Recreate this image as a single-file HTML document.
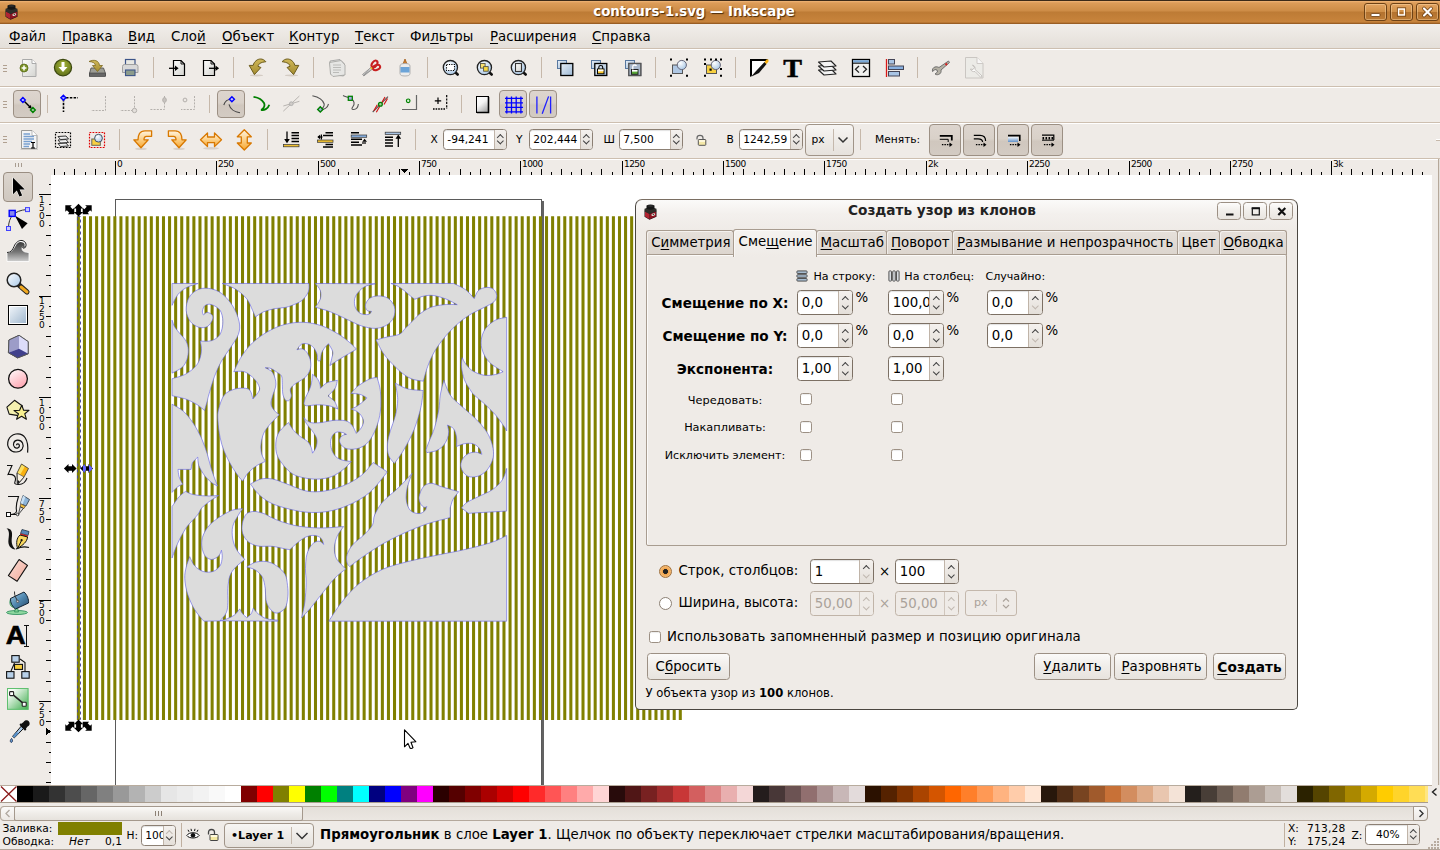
<!DOCTYPE html>
<html lang="ru"><head><meta charset="utf-8"><title>contours-1.svg — Inkscape</title>
<style>
*{box-sizing:border-box;margin:0;padding:0}
html,body{width:1440px;height:850px;overflow:hidden;background:#efebe7;font-family:"DejaVu Sans","Liberation Sans",sans-serif;font-size:13.33px;color:#000}
.abs{position:absolute}
u{text-decoration:underline;text-underline-offset:2px;text-decoration-thickness:1px}
#titlebar{position:absolute;left:0;top:0;width:1440px;height:24px;background:linear-gradient(#3c2a18 0,#3c2a18 1px,#f0b878 1px,#e6a666 2px,#dc9c58 3px,#cd8c46 11px,#bd7b35 12px,#c8843c 22px,#a86828 23px,#8a5420 24px)}
#title{position:absolute;left:0;top:4px;width:1388px;text-align:center;font-weight:bold;color:#fff;font-size:13.33px;text-shadow:1px 1px 1px #4a2a0a;letter-spacing:0}
.wbtn{position:absolute;top:3px;width:23px;height:18px;border:1px solid #6e4215;border-radius:3px;background:linear-gradient(#e3a462,#cf9048 50%,#b3722f 52%,#bd7c36);box-shadow:inset 0 0 0 1px rgba(255,220,170,.45)}
#menubar{position:absolute;left:0;top:24px;width:1440px;height:24px;background:linear-gradient(#f1eeea,#e4dfd9)}
#menubar span{position:absolute;top:5px;white-space:nowrap}
.hsep{position:absolute;left:0;width:1440px;height:2px;background:linear-gradient(#cdbfb0 0,#cdbfb0 1px,#fff 1px,#fff 2px)}
.tbtn{position:absolute;border:1px solid #9c9084;border-radius:4px;background:linear-gradient(#ddd5ce,#d9d1c9 45%,#d0c7be 55%,#d3cbc3)}
.spin{position:absolute;height:21px;border:1px solid #8c8074;border-radius:3.500px;background:#fff;overflow:hidden;box-shadow:inset 0 1px 1px rgba(0,0,0,.12)}
.spin span{position:absolute;left:3.300px;top:3px;white-space:nowrap;font-size:10.670px}
.sm{font-size:10.670px}
.spin i{position:absolute;right:0;top:0;bottom:0;width:12px;background:linear-gradient(#f4f1ee,#e4dfd9);border-left:1px solid #c0b4a8}
.spin i:before,.spin i:after{content:"";position:absolute;left:3px;width:3.600px;height:3.600px;border:solid #444;border-width:1.100px 0 0 1.100px}
.spin i:before{top:5px;transform:rotate(45deg)}
.spin i:after{bottom:5px;transform:rotate(225deg)}
.lbl{position:absolute;white-space:nowrap}
#dlg{border:1px solid #4a4640;border-top-color:#7a6e62;border-radius:7px 7px 5px 5px;background:linear-gradient(#fbfaf9 0,#f3f0ed 14px,#efebe7 30px);overflow:hidden}
.dbtn{width:24px;height:18px;border:1px solid #9c9084;border-radius:3.500px;background:linear-gradient(#fdfcfb,#f1eeea 50%,#e9e5e0)}
.tab{border:1px solid #a89c90;border-bottom:none;border-radius:3px 3px 0 0;background:linear-gradient(#e6e0da,#dcd5ce);box-shadow:inset 1px 1px 0 rgba(255,255,255,.55)}
.tab span{position:absolute;top:3.700px;white-space:nowrap}
.tab.act{background:linear-gradient(#f5f3f0,#efebe7);border-color:#a89c90}
.tab.act span{top:3.800px}
.tab+.tab{}
.xs{font-size:11.100px}
.dsp{height:25px;border-color:#7c7064}
.dsp span{font-size:13.330px;top:4px}
.dsp i{width:14px}
.dsp i:before,.dsp i:after{left:4px}
.dsp i:before{top:5.500px}
.dsp i:after{bottom:5.500px}
.dsp.dn i:after{border-color:#c0b8b0}
.dsp.dis{background:#efebe7;border-color:#c0b4a8;box-shadow:none}
.dsp.dis span{color:#aaa29a}
.dsp.dis i{background:#efebe7;border-left-color:#d0c6bc}
.dsp.dis i:before,.dsp.dis i:after{border-color:#c0b8b0}
.chk{width:12px;height:12px;border:1px solid #9c9084;border-radius:2.500px;background:#fff;box-shadow:inset 0 1px 1px rgba(0,0,0,.08)}
.rad{width:13px;height:13px;border:1px solid #8c8074;border-radius:50%;background:#fff}
.rad.on{background:radial-gradient(circle,#222 0,#222 2.200px,#f0a44c 2.800px,#f6c080 6px);border-color:#a0703c}
.btn{border:1px solid #9c9084;border-radius:3.500px;background:linear-gradient(#fbfaf9,#f0ede9 50%,#e7e3de);text-align:center;padding-top:5px;white-space:nowrap}
.spin.up i:before{border-color:#c0b8b0}

</style></head>
<body>
<div id="titlebar">
<svg class="abs" style="left:4.500px;top:4px" width="13" height="16" viewBox="0 0 13 16"><path d="M0.500 6.500L5.500 9L12.500 6.500V12.700L5.500 15.800L0.500 12.700Z" fill="#1c1418"/><path d="M1 7.500L5.500 9.800V15.200L1 12.400Z" fill="#b02432"/><path d="M5.500 9.800L12 7.400V12.400L5.500 15.200Z" fill="#8e1422"/><path d="M0.500 4.800L6.500 2.800L12.500 4.800V7.300L5.500 10L0.500 7.300Z" fill="#2e2e2a"/><path d="M2.500 1.600Q6.500 -0.600 10.500 1.600V4.800Q6.500 6.800 2.500 4.800Z" fill="#161616"/><ellipse cx="6.500" cy="1.900" rx="2.800" ry="1" fill="#2c2c2c"/><ellipse cx="9.300" cy="10.600" rx="2" ry="1.250" transform="rotate(-20 9.300 10.600)" fill="#e8e0dc"/><ellipse cx="9.400" cy="10.500" rx=".9" ry=".6" transform="rotate(-20 9.400 10.500)" fill="#443"/></svg>
<div id="title">contours-1.svg — Inkscape</div>
<div class="wbtn" style="left:1363.5px"><svg class="abs" style="left:0;top:0" width="21" height="16"><rect x="6" y="9.5" width="9" height="3" rx="1" fill="#fff" stroke="#6a3c10" stroke-width=".8"/></svg></div>
<div class="wbtn" style="left:1389.5px"><svg class="abs" style="left:0;top:0" width="21" height="16"><rect x="7.5" y="5" width="6" height="6" fill="none" stroke="#fff" stroke-width="1.6"/><rect x="6.3" y="3.8" width="8.4" height="8.4" fill="none" stroke="#6a3c10" stroke-width=".7"/></svg></div>
<div class="wbtn" style="left:1415.5px"><svg class="abs" style="left:0;top:0" width="21" height="16"><path d="M7 4.5 L14 11.5 M14 4.5 L7 11.5" stroke="#6a3c10" stroke-width="3.6" stroke-linecap="round"/><path d="M7 4.5 L14 11.5 M14 4.5 L7 11.5" stroke="#fff" stroke-width="2.2" stroke-linecap="round"/></svg></div>
</div>
<div id="menubar">
<span style="left:9px"><u>Ф</u>айл</span><span style="left:62px"><u>П</u>равка</span><span style="left:128px"><u>В</u>ид</span><span style="left:171px">Сло<u>й</u></span><span style="left:222px"><u>О</u>бъект</span><span style="left:289px"><u>К</u>онтур</span><span style="left:355px"><u>Т</u>екст</span><span style="left:410px">Фи<u>л</u>ьтры</span><span style="left:490px"><u>Р</u>асширения</span><span style="left:592px"><u>С</u>правка</span>
</div>
<div class="hsep" style="top:48px"></div>
<div class="hsep" style="top:86px"></div>
<div class="hsep" style="top:122px"></div>
<div class="hsep" style="top:158px"></div>
<div class="abs" style="left:0;top:159px;width:36px;height:626px">
<div class="abs" style="left:15px;top:4px;width:7px;height:4px;background:repeating-linear-gradient(90deg,#a89c90 0,#a89c90 1px,transparent 1px,transparent 3px)"></div>
<div class="abs" style="left:3px;top:13px;width:30px;height:30px;border:1px solid #9a8e82;border-radius:4px;background:linear-gradient(#dcd5ce,#cfc7bf)"></div>
<svg class="abs" style="left:6px;top:16px;overflow:visible" width="24" height="24" viewBox="0 0 24 24"><path d="M7 2.8V19.2L10.8 15.6L13.4 21.6L16.2 20.4L13.6 14.6H18.8Z" fill="#000" stroke="#fff" stroke-width="1" stroke-linejoin="round" paint-order="stroke"/></svg>
<svg class="abs" style="left:6px;top:48px;overflow:visible" width="24" height="24" viewBox="0 0 24 24"><path d="M2.5 21C2.5 10 8 3.5 21 2.5" fill="none" stroke="#333" stroke-width="1"/><path d="M8.8 8.6L21.6 16.2L16 22Z" fill="#000"/><rect x="3.2" y="3.4" width="6" height="6" fill="#8888f0" stroke="#0000ff" stroke-width="1.4"/><rect x="19.5" y="0.6" width="4" height="4" fill="#c8c8ff" stroke="#4040ff" stroke-width="1"/><rect x="0.5" y="19.5" width="4" height="4" fill="#c8c8ff" stroke="#4040ff" stroke-width="1"/></svg>
<svg class="abs" style="left:6px;top:80px;overflow:visible" width="24" height="24" viewBox="0 0 24 24"><defs><linearGradient id="tw" x1="0" y1="0" x2="0" y2="1"><stop offset="0" stop-color="#333"/><stop offset=".55" stop-color="#777"/><stop offset="1" stop-color="#d0d0d0"/></linearGradient></defs><path d="M1 13.5C5 13.5 6.5 11 8 7.5C9.5 3.5 13 1 16 1.5C19.5 2 21 5.5 19.5 8C18.5 9.8 16.5 9.5 16.5 7.8C15.5 9.5 15.5 13.5 23 13.5V22.5H1Z" fill="url(#tw)" stroke="#fff" stroke-width=".8"/><path d="M1.500 13.200C5.500 13 7 10.500 8.500 7.500C10 4 13 2 16 2.500C19 3 20 5.500 19 7.500" fill="none" stroke="#fff" stroke-width="1.400"/><path d="M1 13.500C5 13.500 6.500 11 8 7.500C9.500 3.500 13 1 16 1.500C19.500 2 21 5.500 19.500 8C18.500 9.800 16.500 9.500 16.500 7.800" fill="none" stroke="#222" stroke-width="1"/></svg>
<svg class="abs" style="left:6px;top:112px;overflow:visible" width="24" height="24" viewBox="0 0 24 24"><defs><linearGradient id="zg" x1="0" y1="0" x2="1" y2="1"><stop offset="0" stop-color="#fff"/><stop offset="1" stop-color="#a8c8e8"/></linearGradient></defs><path d="M13 14L21 21" stroke="#222" stroke-width="5" stroke-linecap="round"/><path d="M15 16L21 21" stroke="#f0a820" stroke-width="3" stroke-linecap="round"/><circle cx="8" cy="9" r="6.8" fill="url(#zg)" stroke="#222" stroke-width="1.5"/></svg>
<svg class="abs" style="left:6px;top:144px;overflow:visible" width="24" height="24" viewBox="0 0 24 24"><defs><linearGradient id="rg" x1="0" y1="0" x2="1" y2="1"><stop offset="0" stop-color="#f4f8fc"/><stop offset="1" stop-color="#9cb4cc"/></linearGradient></defs><rect x="2.5" y="2.5" width="19" height="19" fill="url(#rg)" stroke="#000" stroke-width="1"/><rect x="3.5" y="3.5" width="17" height="17" fill="none" stroke="#fff" stroke-width="1"/></svg>
<svg class="abs" style="left:6px;top:176px;overflow:visible" width="24" height="24" viewBox="0 0 24 24"><path d="M13 0.3L22.2 6.6V18.8L11.6 22.9L2.4 17.7L2.9 5Z" fill="#c8c8ec" stroke="#666" stroke-width="1"/><path d="M2.9 5L13 0.3L13 13.7L2.4 17.7Z" fill="#9c9cc8"/><path d="M13 0.3L22.2 6.6V18.8L13 13.7Z" fill="#dcdcfa"/><path d="M2.4 17.7L13 13.7L22.2 18.8L11.6 22.9Z" fill="#40408c"/><path d="M13 0.3L22.2 6.6V18.8L11.6 22.9L2.4 17.7L2.9 5Z" fill="none" stroke="#555" stroke-width="1"/></svg>
<svg class="abs" style="left:6px;top:208px;overflow:visible" width="24" height="24" viewBox="0 0 24 24"><defs><linearGradient id="eg" x1="0" y1="0" x2=".6" y2="1"><stop offset="0" stop-color="#fff"/><stop offset="1" stop-color="#ffa8b4"/></linearGradient></defs><circle cx="12" cy="11.8" r="9.4" fill="url(#eg)" stroke="#111" stroke-width="1.3"/></svg>
<svg class="abs" style="left:6px;top:240px;overflow:visible" width="24" height="24" viewBox="0 0 24 24"><path d="M8.5 1.3L16.1 6.7L12.3 16.6L3.2 15.1L0.9 8.2Z" fill="#f4f0b0" stroke="#111" stroke-width="1.1" stroke-linejoin="round"/><path d="M15.8 6.2L17.6 11.2L23 11.4L18.8 14.8L20.4 20.2L15.6 17.2L10.6 20.2L12.4 14.8L8 11.6L13.6 11.2Z" fill="#f8f090" stroke="#111" stroke-width="1.1" stroke-linejoin="round"/></svg>
<svg class="abs" style="left:6px;top:272px;overflow:visible" width="24" height="24" viewBox="0 0 24 24"><path d="M10.5 14.2C10.5 12.6 13 12.2 13.4 14.4C13.8 16.8 10.6 18 8.6 16.2C6.2 14 7.6 9.4 11.6 9.2C16.2 9 18.6 14.2 16.2 18C13.4 22.2 6.4 21.8 3.4 17.8C-0.4 12.6 2.4 4.4 9.8 3C17.6 1.6 23 8.2 21.6 21.6" fill="none" stroke="#111" stroke-width="1.2"/></svg>
<svg class="abs" style="left:6px;top:304px;overflow:visible" width="24" height="24" viewBox="0 0 24 24"><path d="M1 2.5H6L2 11.5C6 11 9 12 9.5 15.5C10 19 6 21 12 21.5C17 22 20 18 21 15" fill="none" stroke="#111" stroke-width="1.1"/><path d="M15.5 1L22.5 5.5L18 14L11 10Z" fill="#f8b010"/><path d="M15.5 1L19 3.2L14 12L11 10Z" fill="#fce060"/><path d="M11 10L18 14L12.5 20.5L11.5 20Z" fill="#f8f0e0" stroke="#333" stroke-width=".6"/><path d="M11.6 17L13.6 18.2L12.2 21L11.2 20.4Z" fill="#111"/><path d="M15.5 1L22.5 5.5L18 14L12.2 21L11.2 20.4L11 10Z" fill="none" stroke="#333" stroke-width=".8"/></svg>
<svg class="abs" style="left:6px;top:336px;overflow:visible" width="24" height="24" viewBox="0 0 24 24"><g transform="translate(0,-3.5)"><path d="M2 5H12.500C10.500 11 9.500 14 10.500 19C11.200 22 6 23 5 23" fill="none" stroke="#111" stroke-width="1.100"/><path d="M4 23H11" stroke="#111" stroke-width="1"/><rect x="0.500" y="21" width="4" height="4" fill="#fff" stroke="#111" stroke-width="1"/><circle cx="11.600" cy="23" r="1.300" fill="#fff" stroke="#111" stroke-width=".8"/><path d="M17 4L23.500 8L20 14.500L14.500 12Z" fill="#8cb4d8" stroke="#345" stroke-width=".9"/><path d="M17 4L19.500 5.500L16.500 13L14.500 12Z" fill="#c8e0f4"/><path d="M14.800 12.300L19.400 14.700L17.800 17.100L14 15.100Z" fill="#f0c040" stroke="#543" stroke-width=".7"/><path d="M14.200 15.300L17.400 16.900L12.400 23Z" fill="#ddd" stroke="#222" stroke-width=".8"/></g></svg>
<svg class="abs" style="left:6px;top:368px;overflow:visible" width="24" height="24" viewBox="0 0 24 24"><path d="M0.5 1.5C5 1.5 6.5 4 6 9C5.5 14 5 18 9.5 22.5C5 22 1.5 19 2.5 12C3.2 7 3.5 3.5 0.5 1.5Z" fill="#111"/><path d="M10 22C14 20 18 19 23 20.5" fill="none" stroke="#111" stroke-width="1.2"/><path d="M16 2.5L23 4.5L22 8.5L14.5 6.5Z" fill="#5888b8" stroke="#234" stroke-width=".8"/><path d="M14.5 6.5L22 8.5L21.6 10L14 8Z" fill="#d02020"/><path d="M14 8L21.6 10C21 15 17 18 11.5 21.5C10 16 10.5 11 14 8Z" fill="#f8d860" stroke="#111" stroke-width="1"/><path d="M11.8 21L15.5 13.5" stroke="#111" stroke-width="1"/><circle cx="15.6" cy="13.2" r="1.1" fill="#111"/></svg>
<svg class="abs" style="left:6px;top:400px;overflow:visible" width="24" height="24" viewBox="0 0 24 24"><defs><linearGradient id="er" x1="0" y1="0" x2="1" y2="1"><stop offset="0" stop-color="#fce0d8"/><stop offset="1" stop-color="#f0a898"/></linearGradient></defs><path d="M13.1 0.5L21.5 6.4L11.1 22.3L2.4 16.6Z" fill="url(#er)" stroke="#111" stroke-width="1.1" stroke-linejoin="round"/></svg>
<svg class="abs" style="left:6px;top:432px;overflow:visible" width="24" height="24" viewBox="0 0 24 24"><defs><linearGradient id="bk" x1="0" y1="0" x2="1" y2="1"><stop offset="0" stop-color="#a8d0e8"/><stop offset=".5" stop-color="#5088b0"/><stop offset="1" stop-color="#284868"/></linearGradient></defs><ellipse cx="11" cy="21.5" rx="10.5" ry="2" fill="#90d8a0" stroke="#285" stroke-width=".8"/><path d="M4.5 8C3 12 4 16 8 16.5C9.5 17 9 20 8.5 21H12.5C11.5 19 12 17 12 15Z" fill="#80d090" stroke="#285" stroke-width=".7"/><path d="M4.5 7.5L18 1C21 3.5 23 8.5 22.5 12L9.5 18C6 15.5 4.2 11.5 4.5 7.5Z" fill="url(#bk)" stroke="#123" stroke-width="1"/><path d="M8.5 0.5C8 4 10.5 8 11.5 10" fill="none" stroke="#333" stroke-width="1"/><circle cx="11.6" cy="10.4" r="1.2" fill="#ccc" stroke="#333" stroke-width=".6"/></svg>
<svg class="abs" style="left:6px;top:464px;overflow:visible" width="24" height="24" viewBox="0 0 24 24"><text transform="translate(-0.300,21) scale(1.1,1)" font-family="Liberation Sans,DejaVu Sans,sans-serif" font-weight="bold" font-size="25" fill="#000" stroke="#000" stroke-width=".6">A</text><path d="M18 2.5H23M18 23.5H23M20.5 2.5V23.5" stroke="#111" stroke-width="1" fill="none"/></svg>
<svg class="abs" style="left:6px;top:496px;overflow:visible" width="24" height="24" viewBox="0 0 24 24"><path d="M14 4L19 7.5V17M8.5 8L5 16" fill="none" stroke="#111" stroke-width="1.1"/><rect x="5.8" y="0.6" width="7.4" height="6.6" fill="#b8d0e8" stroke="#111" stroke-width="1.1"/><rect x="8.5" y="9.4" width="8" height="5" fill="#f8d040" stroke="#111" stroke-width="1.1"/><rect x="0.6" y="16.6" width="7.4" height="6.6" fill="#b8d0e8" stroke="#111" stroke-width="1.1"/><rect x="15.8" y="16.6" width="7.4" height="6.6" fill="#b8d0e8" stroke="#111" stroke-width="1.1"/></svg>
<svg class="abs" style="left:6px;top:528px;overflow:visible" width="24" height="24" viewBox="0 0 24 24"><defs><linearGradient id="gg" x1="1" y1="1" x2="0.2" y2="0.2"><stop offset="0" stop-color="#38a848"/><stop offset="1" stop-color="#f4fcf4"/></linearGradient></defs><rect x="1" y="1" width="21.5" height="21.8" fill="url(#gg)"/><rect x="1.5" y="1.5" width="20.5" height="20.8" fill="none" stroke="#60c070" stroke-width="1"/><path d="M5.6 6.6L18.2 17.2" stroke="#222" stroke-width="1.6"/><rect x="3.6" y="4.6" width="4" height="4" rx=".8" fill="#fff" stroke="#222" stroke-width="1.1"/><rect x="16.2" y="15.2" width="4" height="4" rx=".8" fill="#fff" stroke="#222" stroke-width="1.1"/></svg>
<svg class="abs" style="left:6px;top:560px;overflow:visible" width="24" height="24" viewBox="0 0 24 24"><path d="M6.6 17.4L15.2 7.2L17.6 9.4L8.4 18.8Z" fill="#a8c8e8" stroke="#111" stroke-width="1"/><path d="M6.6 17.4L10.5 12.8L12.6 14.6L8.4 18.8Z" fill="#5890c8"/><path d="M14 6.4C13 5.4 14.4 4 15.4 4.8L17.6 3C18.6 1 21.6 0.6 23 2.4C24.4 4.4 23.6 6.6 21.6 7.6L20 9.6C21 10.8 19.4 12.2 18.4 11.2Z" fill="#111"/><path d="M5.6 19.4C7 21 6.6 23.2 5.4 23.4C4 23.4 3.8 21 5.6 19.4Z" fill="#70a8e0" stroke="#124" stroke-width=".8"/></svg>
</div>
<svg class="abs" style="left:0;top:159px" width="1440" height="16" viewBox="0 159 1440 16" shape-rendering="crispEdges">
<path d="M54.5 169 V175 M64.5 172 V175 M74.5 169 V175 M85.5 172 V175 M95.5 169 V175 M105.5 172 V175 M115.5 161 V175 M125.5 172 V175 M135.5 169 V175 M145.5 172 V175 M156.5 169 V175 M166.5 172 V175 M176.5 169 V175 M186.5 172 V175 M196.5 169 V175 M206.5 172 V175 M216.5 161 V175 M226.5 172 V175 M237.5 169 V175 M247.5 172 V175 M257.5 169 V175 M267.5 172 V175 M277.5 169 V175 M287.5 172 V175 M297.5 169 V175 M308.5 172 V175 M318.5 161 V175 M328.5 172 V175 M338.5 169 V175 M348.5 172 V175 M358.5 169 V175 M368.5 172 V175 M379.5 169 V175 M389.5 172 V175 M399.5 169 V175 M409.5 172 V175 M419.5 161 V175 M429.5 172 V175 M439.5 169 V175 M449.5 172 V175 M460.5 169 V175 M470.5 172 V175 M480.5 169 V175 M490.5 172 V175 M500.5 169 V175 M510.5 172 V175 M520.5 161 V175 M531.5 172 V175 M541.5 169 V175 M551.5 172 V175 M561.5 169 V175 M571.5 172 V175 M581.5 169 V175 M591.5 172 V175 M601.5 169 V175 M612.5 172 V175 M622.5 161 V175 M632.5 172 V175 M642.5 169 V175 M652.5 172 V175 M662.5 169 V175 M672.5 172 V175 M683.5 169 V175 M693.5 172 V175 M703.5 169 V175 M713.5 172 V175 M723.5 161 V175 M733.5 172 V175 M743.5 169 V175 M754.5 172 V175 M764.5 169 V175 M774.5 172 V175 M784.5 169 V175 M794.5 172 V175 M804.5 169 V175 M814.5 172 V175 M824.5 161 V175 M835.5 172 V175 M845.5 169 V175 M855.5 172 V175 M865.5 169 V175 M875.5 172 V175 M885.5 169 V175 M895.5 172 V175 M906.5 169 V175 M916.5 172 V175 M926.5 161 V175 M936.5 172 V175 M946.5 169 V175 M956.5 172 V175 M966.5 169 V175 M976.5 172 V175 M987.5 169 V175 M997.5 172 V175 M1007.5 169 V175 M1017.5 172 V175 M1027.5 161 V175 M1037.5 172 V175 M1047.5 169 V175 M1058.5 172 V175 M1068.5 169 V175 M1078.5 172 V175 M1088.5 169 V175 M1098.5 172 V175 M1108.5 169 V175 M1118.5 172 V175 M1129.5 161 V175 M1139.5 172 V175 M1149.5 169 V175 M1159.5 172 V175 M1169.5 169 V175 M1179.5 172 V175 M1189.5 169 V175 M1199.5 172 V175 M1210.5 169 V175 M1220.5 172 V175 M1230.5 161 V175 M1240.5 172 V175 M1250.5 169 V175 M1260.5 172 V175 M1270.5 169 V175 M1281.5 172 V175 M1291.5 169 V175 M1301.5 172 V175 M1311.5 169 V175 M1321.5 172 V175 M1331.5 161 V175 M1341.5 172 V175 M1351.5 169 V175 M1362.5 172 V175 M1372.5 169 V175 M1382.5 172 V175 M1392.5 169 V175 M1402.5 172 V175 M1412.5 169 V175 M1422.5 172 V175" stroke="#000" stroke-width="1" fill="none"/>
<text x="117" y="167" font-size="9" letter-spacing="-0.6" font-family="DejaVu Sans,Liberation Sans,sans-serif">0</text>
<text x="218" y="167" font-size="9" letter-spacing="-0.6" font-family="DejaVu Sans,Liberation Sans,sans-serif">250</text>
<text x="320" y="167" font-size="9" letter-spacing="-0.6" font-family="DejaVu Sans,Liberation Sans,sans-serif">500</text>
<text x="421" y="167" font-size="9" letter-spacing="-0.6" font-family="DejaVu Sans,Liberation Sans,sans-serif">750</text>
<text x="522" y="167" font-size="9" letter-spacing="-0.6" font-family="DejaVu Sans,Liberation Sans,sans-serif">1000</text>
<text x="624" y="167" font-size="9" letter-spacing="-0.6" font-family="DejaVu Sans,Liberation Sans,sans-serif">1250</text>
<text x="725" y="167" font-size="9" letter-spacing="-0.6" font-family="DejaVu Sans,Liberation Sans,sans-serif">1500</text>
<text x="826" y="167" font-size="9" letter-spacing="-0.6" font-family="DejaVu Sans,Liberation Sans,sans-serif">1750</text>
<text x="928" y="167" font-size="9" letter-spacing="-0.6" font-family="DejaVu Sans,Liberation Sans,sans-serif">2k</text>
<text x="1029" y="167" font-size="9" letter-spacing="-0.6" font-family="DejaVu Sans,Liberation Sans,sans-serif">2250</text>
<text x="1131" y="167" font-size="9" letter-spacing="-0.6" font-family="DejaVu Sans,Liberation Sans,sans-serif">2500</text>
<text x="1232" y="167" font-size="9" letter-spacing="-0.6" font-family="DejaVu Sans,Liberation Sans,sans-serif">2750</text>
<text x="1333" y="167" font-size="9" letter-spacing="-0.6" font-family="DejaVu Sans,Liberation Sans,sans-serif">3k</text>
<path d="M401 169H408L404.5 173.2Z" fill="#000"/>
</svg>
<svg class="abs" style="left:36px;top:175px" width="15" height="610" viewBox="36 175 15 610" shape-rendering="crispEdges">
<path d="M49 184.5 H51 M39 194.5 H51 M49 204.5 H51 M46 215.5 H51 M49 225.5 H51 M46 235.5 H51 M49 245.5 H51 M46 255.5 H51 M49 265.5 H51 M46 275.5 H51 M49 285.5 H51 M39 296.5 H51 M49 306.5 H51 M46 316.5 H51 M49 326.5 H51 M46 336.5 H51 M49 346.5 H51 M46 356.5 H51 M49 367.5 H51 M46 377.5 H51 M49 387.5 H51 M39 397.5 H51 M49 407.5 H51 M46 417.5 H51 M49 427.5 H51 M46 437.5 H51 M49 448.5 H51 M46 458.5 H51 M49 468.5 H51 M46 478.5 H51 M49 488.5 H51 M39 498.5 H51 M49 508.5 H51 M46 519.5 H51 M49 529.5 H51 M46 539.5 H51 M49 549.5 H51 M46 559.5 H51 M49 569.5 H51 M46 579.5 H51 M49 590.5 H51 M39 600.5 H51 M49 610.5 H51 M46 620.5 H51 M49 630.5 H51 M46 640.5 H51 M49 650.5 H51 M46 660.5 H51 M49 671.5 H51 M46 681.5 H51 M49 691.5 H51 M39 701.5 H51 M49 711.5 H51 M46 721.5 H51 M49 731.5 H51 M46 742.5 H51 M49 752.5 H51 M46 762.5 H51 M49 772.5 H51 M46 782.5 H51" stroke="#000" stroke-width="1" fill="none"/>
<text x="39" y="202.8" font-size="9" font-family="DejaVu Sans,Liberation Sans,sans-serif">1</text>
<text x="39" y="210.7" font-size="9" font-family="DejaVu Sans,Liberation Sans,sans-serif">5</text>
<text x="39" y="218.6" font-size="9" font-family="DejaVu Sans,Liberation Sans,sans-serif">0</text>
<text x="39" y="226.5" font-size="9" font-family="DejaVu Sans,Liberation Sans,sans-serif">0</text>
<text x="39" y="303.8" font-size="9" font-family="DejaVu Sans,Liberation Sans,sans-serif">1</text>
<text x="39" y="311.7" font-size="9" font-family="DejaVu Sans,Liberation Sans,sans-serif">2</text>
<text x="39" y="319.6" font-size="9" font-family="DejaVu Sans,Liberation Sans,sans-serif">5</text>
<text x="39" y="327.5" font-size="9" font-family="DejaVu Sans,Liberation Sans,sans-serif">0</text>
<text x="39" y="405.8" font-size="9" font-family="DejaVu Sans,Liberation Sans,sans-serif">1</text>
<text x="39" y="413.7" font-size="9" font-family="DejaVu Sans,Liberation Sans,sans-serif">0</text>
<text x="39" y="421.6" font-size="9" font-family="DejaVu Sans,Liberation Sans,sans-serif">0</text>
<text x="39" y="429.5" font-size="9" font-family="DejaVu Sans,Liberation Sans,sans-serif">0</text>
<text x="39" y="506.8" font-size="9" font-family="DejaVu Sans,Liberation Sans,sans-serif">7</text>
<text x="39" y="514.7" font-size="9" font-family="DejaVu Sans,Liberation Sans,sans-serif">5</text>
<text x="39" y="522.6" font-size="9" font-family="DejaVu Sans,Liberation Sans,sans-serif">0</text>
<text x="39" y="607.8" font-size="9" font-family="DejaVu Sans,Liberation Sans,sans-serif">5</text>
<text x="39" y="615.7" font-size="9" font-family="DejaVu Sans,Liberation Sans,sans-serif">0</text>
<text x="39" y="623.6" font-size="9" font-family="DejaVu Sans,Liberation Sans,sans-serif">0</text>
<text x="39" y="709.8" font-size="9" font-family="DejaVu Sans,Liberation Sans,sans-serif">2</text>
<text x="39" y="717.7" font-size="9" font-family="DejaVu Sans,Liberation Sans,sans-serif">5</text>
<text x="39" y="725.6" font-size="9" font-family="DejaVu Sans,Liberation Sans,sans-serif">0</text>
<path d="M46 728V735L51 731.5Z" fill="#000"/>
</svg>
<div id="canvas" class="abs" style="left:51px;top:175px;width:1381px;height:610px;background:#fff;overflow:hidden">
<svg class="abs" style="left:0;top:0" width="1381" height="610" viewBox="51 175 1381 610">
<rect x="542" y="201" width="2" height="600" fill="#636363" shape-rendering="crispEdges"/>
<rect x="115.5" y="199.5" width="426" height="604" fill="none" stroke="#5a5a5a" stroke-width="1" shape-rendering="crispEdges"/>
<path d="M76.85 216.3h3.04V719.9h-3.04zM82.93 216.3h3.04V719.9h-3.04zM89.01 216.3h3.04V719.9h-3.04zM95.09 216.3h3.04V719.9h-3.04zM101.17 216.3h3.04V719.9h-3.04zM107.25 216.3h3.04V719.9h-3.04zM113.33 216.3h3.04V719.9h-3.04zM119.41 216.3h3.04V719.9h-3.04zM125.49 216.3h3.04V719.9h-3.04zM131.57 216.3h3.04V719.9h-3.04zM137.65 216.3h3.04V719.9h-3.04zM143.73 216.3h3.04V719.9h-3.04zM149.81 216.3h3.04V719.9h-3.04zM155.89 216.3h3.04V719.9h-3.04zM161.97 216.3h3.04V719.9h-3.04zM168.05 216.3h3.04V719.9h-3.04zM174.13 216.3h3.04V719.9h-3.04zM180.21 216.3h3.04V719.9h-3.04zM186.29 216.3h3.04V719.9h-3.04zM192.37 216.3h3.04V719.9h-3.04zM198.45 216.3h3.04V719.9h-3.04zM204.53 216.3h3.04V719.9h-3.04zM210.61 216.3h3.04V719.9h-3.04zM216.69 216.3h3.04V719.9h-3.04zM222.77 216.3h3.04V719.9h-3.04zM228.85 216.3h3.04V719.9h-3.04zM234.93 216.3h3.04V719.9h-3.04zM241.01 216.3h3.04V719.9h-3.04zM247.09 216.3h3.04V719.9h-3.04zM253.17 216.3h3.04V719.9h-3.04zM259.25 216.3h3.04V719.9h-3.04zM265.33 216.3h3.04V719.9h-3.04zM271.41 216.3h3.04V719.9h-3.04zM277.49 216.3h3.04V719.9h-3.04zM283.57 216.3h3.04V719.9h-3.04zM289.65 216.3h3.04V719.9h-3.04zM295.73 216.3h3.04V719.9h-3.04zM301.81 216.3h3.04V719.9h-3.04zM307.89 216.3h3.04V719.9h-3.04zM313.97 216.3h3.04V719.9h-3.04zM320.05 216.3h3.04V719.9h-3.04zM326.13 216.3h3.04V719.9h-3.04zM332.21 216.3h3.04V719.9h-3.04zM338.29 216.3h3.04V719.9h-3.04zM344.37 216.3h3.04V719.9h-3.04zM350.45 216.3h3.04V719.9h-3.04zM356.53 216.3h3.04V719.9h-3.04zM362.61 216.3h3.04V719.9h-3.04zM368.69 216.3h3.04V719.9h-3.04zM374.77 216.3h3.04V719.9h-3.04zM380.85 216.3h3.04V719.9h-3.04zM386.93 216.3h3.04V719.9h-3.04zM393.01 216.3h3.04V719.9h-3.04zM399.09 216.3h3.04V719.9h-3.04zM405.17 216.3h3.04V719.9h-3.04zM411.25 216.3h3.04V719.9h-3.04zM417.33 216.3h3.04V719.9h-3.04zM423.41 216.3h3.04V719.9h-3.04zM429.49 216.3h3.04V719.9h-3.04zM435.57 216.3h3.04V719.9h-3.04zM441.65 216.3h3.04V719.9h-3.04zM447.73 216.3h3.04V719.9h-3.04zM453.81 216.3h3.04V719.9h-3.04zM459.89 216.3h3.04V719.9h-3.04zM465.97 216.3h3.04V719.9h-3.04zM472.05 216.3h3.04V719.9h-3.04zM478.13 216.3h3.04V719.9h-3.04zM484.21 216.3h3.04V719.9h-3.04zM490.29 216.3h3.04V719.9h-3.04zM496.37 216.3h3.04V719.9h-3.04zM502.45 216.3h3.04V719.9h-3.04zM508.53 216.3h3.04V719.9h-3.04zM514.61 216.3h3.04V719.9h-3.04zM520.69 216.3h3.04V719.9h-3.04zM526.77 216.3h3.04V719.9h-3.04zM532.85 216.3h3.04V719.9h-3.04zM538.93 216.3h3.04V719.9h-3.04zM545.01 216.3h3.04V719.9h-3.04zM551.09 216.3h3.04V719.9h-3.04zM557.17 216.3h3.04V719.9h-3.04zM563.25 216.3h3.04V719.9h-3.04zM569.33 216.3h3.04V719.9h-3.04zM575.41 216.3h3.04V719.9h-3.04zM581.49 216.3h3.04V719.9h-3.04zM587.57 216.3h3.04V719.9h-3.04zM593.65 216.3h3.04V719.9h-3.04zM599.73 216.3h3.04V719.9h-3.04zM605.81 216.3h3.04V719.9h-3.04zM611.89 216.3h3.04V719.9h-3.04zM617.97 216.3h3.04V719.9h-3.04zM624.05 216.3h3.04V719.9h-3.04zM630.13 216.3h3.04V719.9h-3.04zM636.21 216.3h3.04V719.9h-3.04zM642.29 216.3h3.04V719.9h-3.04zM648.37 216.3h3.04V719.9h-3.04zM654.45 216.3h3.04V719.9h-3.04zM660.53 216.3h3.04V719.9h-3.04zM666.61 216.3h3.04V719.9h-3.04zM672.69 216.3h3.04V719.9h-3.04zM678.77 216.3h3.04V719.9h-3.04z" fill="#808000"/>
<g fill="#dcdcdc" stroke="#5c5ce6" stroke-width="0.6" stroke-linejoin="round">
<path d="M172.06 283.47L198.18 283.47C196.18 284.18 189.59 285.82 186.18 287.71C182.76 289.59 180.06 291.82 177.71 294.76C175.35 297.71 173.00 303.59 172.06 305.35L172.06 283.47Z"/>
<path d="M172.06 320.18C172.53 321.35 173.47 324.88 174.88 327.24C176.29 329.59 178.65 331.94 180.53 334.29C182.41 336.65 184.88 338.76 186.18 341.35C187.47 343.94 188.18 346.76 188.29 349.82C188.41 352.88 187.94 356.76 186.88 359.71C185.82 362.65 184.41 365.24 181.94 367.47C179.47 369.71 173.71 372.18 172.06 373.12L172.06 320.18Z"/>
<path d="M172.06 378.76C174.41 377.94 181.94 376.29 186.18 373.82C190.41 371.35 194.93 367.71 197.47 363.94C200.01 360.18 200.95 355.05 201.42 351.24C201.89 347.42 200.48 342.76 200.29 341.07C202.18 341.00 208.29 341.78 211.59 340.65C214.88 339.52 218.18 337.47 220.06 334.29C221.94 331.12 222.88 325.59 222.88 321.59C222.88 317.59 221.94 313.12 220.06 310.29C218.18 307.47 214.06 305.47 211.59 304.65C209.12 303.82 206.76 304.29 205.24 305.35C203.71 306.41 202.72 309.40 202.41 311.00C202.11 312.60 203.24 314.29 203.40 314.95C204.06 314.53 205.87 312.36 207.35 312.41C208.84 312.46 211.47 313.94 212.29 315.24C213.12 316.53 213.12 318.29 212.29 320.18C211.47 322.06 209.59 325.35 207.35 326.53C205.12 327.71 201.71 328.06 198.88 327.24C196.06 326.41 192.53 324.41 190.41 321.59C188.29 318.76 186.41 314.29 186.18 310.29C185.94 306.29 187.12 301.00 189.00 297.59C190.88 294.18 194.18 291.35 197.47 289.82C200.76 288.29 204.76 287.82 208.76 288.41C212.76 289.00 217.47 290.41 221.47 293.35C225.47 296.29 229.82 301.35 232.76 306.06C235.71 310.76 238.18 316.88 239.12 321.59C240.06 326.29 239.94 329.82 238.41 334.29C236.88 338.76 232.76 343.94 229.94 348.41C227.12 352.88 224.06 356.41 221.47 361.12C218.88 365.82 216.53 371.00 214.41 376.65C212.29 382.29 209.94 391.00 208.76 395.00C207.59 399.00 208.06 398.06 207.35 400.65C206.65 403.24 205.00 408.88 204.53 410.53C203.35 409.59 200.53 406.76 197.47 404.88C194.41 403.00 190.41 400.76 186.18 399.24C181.94 397.71 174.41 396.29 172.06 395.71L172.06 378.76Z"/>
<path d="M222.18 283.47L309.00 283.47C308.88 284.88 309.47 289.12 308.29 291.94C307.12 294.76 304.65 298.18 301.94 300.41C299.24 302.65 294.88 304.18 292.06 305.35C289.24 306.53 287.82 306.93 285.00 307.47C282.18 308.01 278.65 307.89 275.12 308.60C271.59 309.31 267.12 310.32 263.82 311.71C260.53 313.09 256.76 316.06 255.35 316.93C254.88 315.82 253.94 313.28 252.53 310.29C251.12 307.31 249.71 302.53 246.88 299.00C244.06 295.47 239.71 291.71 235.59 289.12C231.47 286.53 224.41 284.41 222.18 283.47L222.18 283.47Z"/>
<path d="M315.35 283.47L375.35 283.75C373.47 284.29 367.35 284.93 364.06 287.00C360.76 289.07 357.12 293.00 355.59 296.18C354.06 299.35 354.18 303.24 354.88 306.06C355.59 308.88 357.59 311.71 359.82 313.12C362.06 314.53 366.34 314.81 368.29 314.53C370.25 314.25 371.00 311.94 371.54 311.42C370.76 311.24 367.89 311.42 366.88 310.29C365.87 309.16 365.00 306.65 365.47 304.65C365.94 302.65 367.59 299.75 369.71 298.29C371.82 296.84 375.12 295.89 378.18 295.89C381.24 295.89 385.35 296.48 388.06 298.29C390.76 300.11 393.47 303.59 394.41 306.76C395.35 309.94 395.00 314.29 393.71 317.35C392.41 320.41 389.71 323.28 386.65 325.12C383.59 326.95 379.59 328.25 375.35 328.36C371.12 328.48 366.18 327.42 361.24 325.82C356.29 324.22 350.88 321.12 345.71 318.76C340.53 316.41 335.24 313.64 330.18 311.71C325.12 309.78 317.82 307.94 315.35 307.19C316.18 305.82 319.47 301.78 320.29 299.00C321.12 296.22 321.12 293.12 320.29 290.53C319.47 287.94 316.18 284.65 315.35 283.47Z"/>
<path d="M390.88 283.47L453.71 283.47C455.71 284.53 462.29 287.31 465.71 289.82C469.12 292.34 472.76 297.12 474.18 298.58C474.88 297.24 476.41 292.39 478.41 290.53C480.41 288.67 483.71 287.66 486.18 287.42C488.65 287.19 491.47 287.78 493.24 289.12C495.00 290.46 496.65 293.35 496.76 295.47C496.88 297.59 496.06 299.82 493.94 301.82C491.82 303.82 487.82 305.47 484.06 307.47C480.29 309.47 475.59 311.24 471.35 313.82C467.12 316.41 462.88 319.35 458.65 323.00C454.41 326.65 449.94 331.00 445.94 335.71C441.94 340.41 437.71 346.06 434.65 351.24C431.59 356.41 429.47 361.78 427.59 366.76C425.71 371.75 424.06 378.76 423.35 381.16C421.71 380.88 416.53 380.46 413.47 379.47C410.41 378.48 408.06 377.35 405.00 375.24C401.94 373.12 398.65 370.29 395.12 366.76C391.59 363.24 387.00 358.53 383.82 354.06C380.65 349.59 377.35 342.29 376.06 339.94C377.82 339.47 382.76 338.06 386.65 337.12C390.53 336.18 396.29 335.71 399.35 334.29C402.41 332.88 403.12 330.53 405.00 328.65C406.88 326.76 408.29 325.35 410.65 323.00C413.00 320.65 415.82 317.12 419.12 314.53C422.41 311.94 426.18 309.12 430.41 307.47C434.65 305.82 440.06 305.12 444.53 304.65C449.00 304.18 455.12 304.65 457.24 304.65C455.35 303.71 449.94 300.53 445.94 299.00C441.94 297.47 437.00 295.94 433.24 295.47C429.47 295.00 426.41 295.54 423.35 296.18C420.29 296.81 416.29 298.76 414.88 299.28C414.18 298.76 412.29 297.52 410.65 296.18C409.00 294.84 407.12 292.88 405.00 291.24C402.88 289.59 400.29 287.59 397.94 286.29C395.59 285.00 392.06 283.94 390.88 283.47Z"/>
<path d="M506.65 317.35C504.76 317.82 498.88 318.29 495.35 320.18C491.82 322.06 487.82 325.35 485.47 328.65C483.12 331.94 481.71 336.18 481.24 339.94C480.76 343.71 481.24 347.47 482.65 351.24C484.06 355.00 486.29 359.12 489.71 362.53C493.12 365.94 500.88 370.18 503.12 371.71C501.82 372.18 498.53 373.94 495.35 374.53C492.18 375.12 487.82 375.82 484.06 375.24C480.29 374.65 475.82 372.88 472.76 371.00C469.71 369.12 467.47 366.18 465.71 363.94C463.94 361.71 462.76 358.65 462.18 357.59C462.06 359.12 461.12 363.12 461.47 366.76C461.82 370.41 462.88 375.71 464.29 379.47C465.71 383.24 468.29 386.76 469.94 389.35C471.59 391.94 471.82 392.65 474.18 395.00C476.53 397.35 480.53 400.18 484.06 403.47C487.59 406.76 492.06 411.00 495.35 414.76C498.65 418.53 501.94 423.35 503.82 426.06C505.71 428.76 506.18 430.18 506.65 431.00L506.65 317.35Z"/>
<path d="M233.75 371.71C235.00 369.24 238.11 361.71 241.24 356.88C244.36 352.06 248.06 347.00 252.53 342.76C257.00 338.53 262.65 334.53 268.06 331.47C273.47 328.41 279.12 325.94 285.00 324.41C290.88 322.88 297.24 322.06 303.35 322.29C309.47 322.53 315.82 323.82 321.71 325.82C327.59 327.82 333.94 331.47 338.65 334.29C343.35 337.12 346.95 340.29 349.94 342.76C352.93 345.24 355.47 348.06 356.58 349.12C354.79 350.17 349.23 353.42 345.88 355.41C342.53 357.40 339.14 359.36 336.47 361.06C333.80 362.75 330.98 364.82 329.88 365.58C330.20 364.35 331.29 360.56 331.76 358.24C332.24 355.91 333.25 354.08 332.71 351.65C332.16 349.22 329.18 344.98 328.47 343.65C327.76 344.43 325.41 346.71 324.24 348.35C323.06 350.00 322.04 351.57 321.41 353.53C320.78 355.49 320.86 358.91 320.47 360.12C320.08 361.33 319.53 360.78 319.06 360.78C318.59 360.78 317.96 361.17 317.65 360.12C317.33 359.07 317.80 356.51 317.18 354.47C316.55 352.43 315.37 349.61 313.88 347.88C312.39 346.16 310.27 344.75 308.24 344.12C306.20 343.49 303.53 343.18 301.65 344.12C299.76 345.06 297.73 348.82 296.94 349.76C297.73 349.61 300.08 348.51 301.65 348.82C303.22 349.14 304.94 349.92 306.35 351.65C307.76 353.37 309.41 356.51 310.12 359.18C310.82 361.84 311.06 364.98 310.59 367.65C310.12 370.31 308.78 373.14 307.29 375.18C305.80 377.22 303.84 378.31 301.65 379.88C299.45 381.45 296.00 383.02 294.12 384.59C292.24 386.16 290.82 387.41 290.35 389.29C289.88 391.18 291.45 394.08 291.29 395.88C291.14 397.69 290.07 399.30 289.41 400.12C288.75 400.93 288.05 400.85 287.34 400.78C286.64 400.70 285.93 400.78 285.18 399.65C284.42 398.52 283.29 396.51 282.82 394.00C282.35 391.49 282.51 387.41 282.35 384.59C282.20 381.76 282.27 378.78 281.88 377.06C281.49 375.33 280.72 374.97 280.00 374.24C279.28 373.50 279.09 373.60 277.59 372.65C276.09 371.70 273.06 369.35 271.00 368.53C268.94 367.71 266.20 367.84 265.24 367.71C266.47 368.53 270.86 369.90 272.65 372.65C274.43 375.39 275.94 380.33 275.94 384.18C275.94 388.02 273.47 392.41 272.65 395.71C271.82 399.00 270.73 401.47 271.00 403.94C271.27 406.41 272.92 408.75 274.29 410.53C275.67 412.31 278.41 413.96 279.24 414.65C277.84 416.08 273.45 420.16 270.88 423.24C268.31 426.31 265.47 429.59 263.82 433.12C262.18 436.65 261.35 440.88 261.00 444.41C260.65 447.94 260.95 451.47 261.71 454.29C262.46 457.12 264.88 460.18 265.52 461.35C264.06 462.06 259.64 463.71 256.76 465.59C253.89 467.47 250.65 470.06 248.29 472.65C245.94 475.24 243.59 479.71 242.65 481.12C241.94 480.29 240.29 478.76 238.41 476.18C236.53 473.59 233.71 469.71 231.35 465.59C229.00 461.47 226.18 456.18 224.29 451.47C222.41 446.76 221.12 442.53 220.06 437.35C219.00 432.18 218.18 425.12 217.94 420.41C217.71 415.71 217.59 413.35 218.65 409.12C219.71 404.88 221.61 398.33 224.29 395.00C226.98 391.67 231.24 390.24 234.76 389.12C238.29 388.00 242.86 387.96 245.47 388.29C248.08 388.62 249.18 389.31 250.41 391.09C251.65 392.88 252.47 397.68 252.88 399.00C253.76 397.90 257.05 394.33 258.15 392.41C259.25 390.49 260.07 389.67 259.47 387.47C258.87 385.27 257.00 381.84 254.53 379.24C252.06 376.63 248.11 373.08 244.65 371.82C241.18 370.57 235.57 371.73 233.75 371.71Z"/>
<path d="M312.47 374.24C313.33 375.02 316.39 377.22 317.65 378.94C318.90 380.67 319.53 383.02 320.00 384.59C320.47 386.16 320.39 387.73 320.47 388.35C321.57 387.41 324.24 384.04 327.06 382.71C329.88 381.37 335.69 380.75 337.41 380.35C337.10 381.53 336.47 385.45 335.53 387.41C334.59 389.37 333.02 390.71 331.76 392.12C330.51 393.53 328.63 395.25 328.00 395.88C329.10 396.82 332.94 399.33 334.59 401.53C336.24 403.73 337.33 407.80 337.88 409.06C336.39 408.51 332.31 406.47 328.94 405.76C325.57 405.06 321.41 404.82 317.65 404.82C313.88 404.82 308.63 406.00 306.35 405.76C304.08 405.53 304.39 403.80 304.00 403.41C304.24 402.47 304.55 399.96 305.41 397.76C306.27 395.57 308.16 392.75 309.18 390.24C310.20 387.73 310.98 385.37 311.53 382.71C312.08 380.04 312.31 375.65 312.47 374.24Z"/>
<path d="M172.06 404.18C173.94 405.35 179.82 408.06 183.35 411.24C186.88 414.41 190.18 418.65 193.24 423.24C196.29 427.82 199.35 433.59 201.71 438.76C204.06 443.94 205.71 449.12 207.35 454.29C209.00 459.47 209.89 464.53 211.59 469.82C213.28 475.12 216.53 483.35 217.52 486.06C216.53 485.47 213.75 484.29 211.59 482.53C209.42 480.76 206.65 478.29 204.53 475.47C202.41 472.65 200.01 468.65 198.88 465.59C197.75 462.53 197.94 458.53 197.75 457.12C196.88 458.06 193.64 460.72 192.53 462.76C191.42 464.81 191.35 468.29 191.12 469.40L177.99 469.40C178.18 470.65 178.34 474.41 179.12 476.88C179.89 479.35 182.06 483.00 182.65 484.22C181.82 484.65 179.47 485.40 177.71 486.76C175.94 488.13 173.00 491.47 172.06 492.41L172.06 404.18Z"/>
<path d="M377.12 377.35C377.67 379.69 379.86 385.73 380.41 391.35C380.96 396.98 381.10 405.08 380.41 411.12C379.73 417.16 378.23 422.53 376.29 427.59C374.36 432.65 371.64 438.08 368.82 441.47C366.01 444.86 362.75 446.67 359.41 447.94C356.08 449.22 351.67 449.41 348.82 449.12C345.98 448.82 343.88 447.45 342.35 446.18C340.82 444.90 339.94 442.94 339.65 441.47C339.35 440.00 339.94 438.43 340.59 437.35C341.24 436.27 342.55 435.49 343.53 435.00C344.51 434.51 345.98 434.51 346.47 434.41C345.88 434.12 344.51 433.04 342.94 432.65C341.37 432.25 338.73 431.67 337.06 432.06C335.39 432.45 334.02 433.43 332.94 435.00C331.86 436.57 330.78 439.02 330.59 441.47C330.39 443.92 330.88 447.16 331.76 449.71C332.65 452.25 334.02 455.00 335.88 456.76C337.75 458.53 340.35 459.51 342.94 460.29C345.53 461.08 350.00 461.27 351.41 461.47C350.00 462.84 346.31 467.16 342.94 469.71C339.57 472.25 335.49 475.20 331.18 476.76C326.86 478.33 321.96 479.02 317.06 479.12C312.16 479.22 306.27 478.53 301.76 477.35C297.25 476.18 293.97 475.43 290.00 472.06C286.03 468.69 280.30 461.96 277.94 457.12C275.58 452.27 275.59 447.24 275.82 443.00C276.06 438.76 277.24 435.12 279.35 431.71C281.47 428.29 287.00 424.06 288.53 422.53C289.35 423.82 291.47 427.94 293.47 430.29C295.47 432.65 298.18 434.76 300.53 436.65C302.88 438.53 305.82 439.82 307.59 441.59C309.35 443.35 310.29 445.31 311.12 447.24C311.94 449.16 312.29 452.18 312.53 453.16C313.12 452.18 315.35 449.64 316.06 447.24C316.76 444.84 317.47 441.59 316.76 438.76C316.06 435.94 313.59 432.88 311.82 430.29C310.06 427.71 307.52 425.35 306.18 423.24C304.84 421.12 304.18 418.53 303.78 417.59C304.88 418.41 307.42 421.71 310.41 422.53C313.40 423.35 317.94 422.88 321.71 422.53C325.47 422.18 329.00 420.69 333.00 420.41C337.00 420.13 342.53 420.01 345.71 420.84C348.88 421.66 350.29 423.26 352.06 425.35C353.82 427.45 355.59 432.06 356.29 433.40C357.11 432.49 359.97 429.93 361.18 427.94C362.38 425.95 363.53 423.53 363.53 421.47C363.53 419.41 362.25 417.25 361.18 415.59C360.10 413.92 358.73 412.55 357.06 411.47C355.39 410.39 352.16 409.51 351.18 409.12C352.16 408.63 355.29 407.25 357.06 406.18C358.82 405.10 360.10 404.02 361.76 402.65C363.43 401.27 366.18 398.73 367.06 397.94C366.18 397.45 363.43 395.69 361.76 395.00C360.10 394.31 358.82 394.08 357.06 393.82C355.29 393.57 352.16 393.53 351.18 393.47C351.67 392.84 352.68 391.16 354.12 389.71C355.56 388.25 357.23 386.55 359.82 384.76C362.42 382.98 366.82 380.24 369.71 379.00C372.59 377.76 375.88 377.63 377.12 377.35Z"/>
<path d="M250.41 483.94C252.18 483.12 257.35 479.82 261.00 479.00C264.65 478.18 268.29 478.29 272.29 479.00C276.29 479.71 279.35 481.24 285.00 483.24C290.65 485.24 299.59 489.71 306.18 491.00C312.76 492.29 318.18 491.94 324.53 491.00C330.88 490.06 338.18 487.94 344.29 485.35C350.41 482.76 356.41 479.28 361.24 475.47C366.06 471.66 371.24 464.65 373.24 462.48L387.35 471.94C384.41 475.35 376.18 486.88 369.71 492.41C363.24 497.94 355.59 501.94 348.53 505.12C341.47 508.29 334.41 510.29 327.35 511.47C320.29 512.65 313.24 512.76 306.18 512.18C299.12 511.59 291.12 509.59 285.00 507.94C278.88 506.29 273.94 504.65 269.47 502.29C265.00 499.94 261.35 496.88 258.18 493.82C255.00 490.76 251.71 485.59 250.41 483.94Z"/>
<path d="M395.24 383.12C397.29 384.08 402.92 387.65 407.59 388.88C412.25 390.12 420.63 390.25 423.24 390.53C422.82 393.41 422.27 401.37 420.76 407.82C419.25 414.27 416.92 422.37 414.18 429.24C411.43 436.10 407.59 443.29 404.29 449.00C401.00 454.71 396.06 461.08 394.41 463.49C393.45 462.18 389.80 458.83 388.65 455.59C387.49 452.35 387.22 448.18 387.49 444.06C387.77 439.94 389.00 435.55 390.29 430.88C391.58 426.22 394.00 421.27 395.24 416.06C396.47 410.84 397.71 405.08 397.71 399.59C397.71 394.10 395.65 385.86 395.24 383.12Z"/>
<path d="M443.82 380.18C443.24 382.65 441.12 390.18 440.29 395.00C439.47 399.82 439.82 403.71 438.88 409.12C437.94 414.53 436.29 422.06 434.65 427.47C433.00 432.88 430.41 437.94 429.00 441.59C427.59 445.24 426.53 447.52 426.18 449.35C425.82 451.19 426.76 452.06 426.88 452.60C428.41 452.29 433.35 451.89 436.06 450.76C438.76 449.64 441.24 447.82 443.12 445.82C445.00 443.82 446.41 441.12 447.35 438.76C448.29 436.41 448.76 433.99 448.76 431.71C448.76 429.42 447.59 426.18 447.35 425.07C448.41 425.71 452.18 426.84 453.71 428.88C455.24 430.93 456.06 434.41 456.53 437.35C457.00 440.29 456.53 445.00 456.53 446.53C457.82 446.06 461.59 444.18 464.29 443.71C467.00 443.24 470.29 443.00 472.76 443.71C475.24 444.41 477.59 446.18 479.12 447.94C480.65 449.71 481.47 453.24 481.94 454.29C480.88 453.94 477.82 452.29 475.59 452.18C473.35 452.06 470.65 452.53 468.53 453.59C466.41 454.65 464.18 456.53 462.88 458.53C461.59 460.53 460.65 463.24 460.76 465.59C460.88 467.94 462.06 470.76 463.59 472.65C465.12 474.53 467.24 476.41 469.94 476.88C472.65 477.35 476.76 476.88 479.82 475.47C482.88 474.06 486.06 471.47 488.29 468.41C490.53 465.35 492.53 460.88 493.24 457.12C493.94 453.35 493.35 449.59 492.53 445.82C491.71 442.06 490.18 438.06 488.29 434.53C486.41 431.00 484.06 427.94 481.24 424.65C478.41 421.35 474.88 418.06 471.35 414.76C467.82 411.47 463.59 408.18 460.06 404.88C456.53 401.59 452.88 399.12 450.18 395.00C447.47 390.88 444.88 382.65 443.82 380.18Z"/>
<path d="M506.65 468.41C505.94 470.29 504.76 476.18 502.41 479.71C500.06 483.24 496.53 486.76 492.53 489.59C488.53 492.41 482.65 494.53 478.41 496.65C474.18 498.76 469.94 500.41 467.12 502.29C464.29 504.18 462.41 507.00 461.47 507.94L468.53 513.31L506.65 511.05L506.65 468.41Z"/>
<path d="M172.06 506.53C173.24 504.88 176.88 499.16 179.12 496.65C181.35 494.13 184.41 492.29 185.47 491.42C186.76 491.94 189.82 493.78 193.24 494.53C196.65 495.28 201.71 495.78 205.94 495.94C210.18 496.11 216.53 495.59 218.65 495.52C217.24 496.41 213.00 498.81 210.18 500.88C207.35 502.95 203.82 505.59 201.71 507.94C199.59 510.29 200.06 511.71 197.47 515.00C194.88 518.29 189.47 523.00 186.18 527.71C182.88 532.41 180.06 538.18 177.71 543.24C175.35 548.29 173.00 555.59 172.06 558.06L172.06 506.53Z"/>
<path d="M242.65 508.65C241.94 509.71 240.06 512.06 238.41 515.00C236.76 517.94 233.71 522.29 232.76 526.29C231.82 530.29 232.06 535.00 232.76 539.00C233.47 543.00 235.00 546.88 237.00 550.29C239.00 553.71 243.47 557.94 244.76 559.47C243.24 560.76 238.06 564.53 235.59 567.24C233.12 569.94 231.24 572.18 229.94 575.71C228.65 579.24 228.18 583.94 227.82 588.41C227.47 592.88 228.06 598.53 227.82 602.53C227.59 606.53 227.71 609.35 226.41 612.41C225.12 615.47 221.12 619.47 220.06 620.88L203.82 621.16C202.29 619.24 197.35 614.11 194.65 609.59C191.94 605.07 189.24 599.24 187.59 594.06C185.94 588.88 185.00 583.00 184.76 578.53C184.53 574.06 185.35 570.88 186.18 567.24C187.00 563.59 189.12 558.41 189.71 556.65C190.53 558.18 192.41 563.35 194.65 565.82C196.88 568.29 200.06 570.53 203.12 571.47C206.18 572.41 210.18 572.41 213.00 571.47C215.82 570.53 218.53 568.18 220.06 565.82C221.59 563.47 221.94 559.94 222.18 557.35C222.41 554.76 221.59 551.47 221.47 550.29C221.00 551.24 220.29 554.41 218.65 555.94C217.00 557.47 213.82 559.47 211.59 559.47C209.35 559.47 206.84 557.94 205.24 555.94C203.64 553.94 202.46 550.53 201.99 547.47C201.52 544.41 201.52 540.88 202.41 537.59C203.31 534.29 205.35 530.53 207.35 527.71C209.35 524.88 211.82 522.76 214.41 520.65C217.00 518.53 219.82 516.76 222.88 515.00C225.94 513.24 229.47 511.12 232.76 510.06C236.06 509.00 241.00 508.88 242.65 508.65Z"/>
<path d="M220.06 620.88C221.24 620.53 224.76 619.71 227.12 618.76C229.47 617.82 232.06 616.88 234.18 615.24C236.29 613.59 238.88 609.94 239.82 608.88C240.29 609.71 241.47 612.34 242.65 613.82C243.82 615.31 246.18 617.12 246.88 617.78C247.59 617.12 250.06 615.42 251.12 613.82C252.18 612.22 252.88 609.12 253.24 608.18C254.06 609.12 255.94 612.06 258.18 613.82C260.41 615.59 263.35 617.71 266.65 618.76C269.94 619.82 276.06 619.94 277.94 620.18L277.94 621.16L220.06 620.88Z"/>
<path d="M289.94 549.59C291.24 548.41 295.00 544.65 297.71 542.53C300.41 540.41 303.35 538.06 306.18 536.88C309.00 535.71 312.18 535.24 314.65 535.47C317.12 535.71 319.47 536.81 321.00 538.29C322.53 539.78 323.35 543.35 323.82 544.36C323.00 543.82 320.88 541.07 318.88 541.12C316.88 541.16 313.82 542.41 311.82 544.65C309.82 546.88 307.94 550.53 306.88 554.53C305.82 558.53 305.59 563.94 305.47 568.65C305.35 573.35 306.29 577.12 306.18 582.76C306.06 588.41 305.52 596.69 304.76 602.53C304.01 608.36 302.18 615.24 301.66 617.78C303.12 616.18 307.07 612.13 310.41 608.18C313.75 604.22 317.71 599.00 321.71 594.06C325.71 589.12 330.41 582.72 334.41 578.53C338.41 574.34 343.82 570.53 345.71 568.93C344.18 567.24 338.41 562.34 336.53 558.76C334.65 555.19 334.29 551.24 334.41 547.47C334.53 543.71 335.71 539.66 337.24 536.18C338.76 532.69 342.53 528.18 343.59 526.58C339.71 526.81 327.71 528.04 320.29 527.99C312.88 527.94 305.00 527.16 299.12 526.29C293.24 525.42 289.00 523.94 285.00 522.76C281.00 521.59 278.18 520.53 275.12 519.24C272.06 517.94 268.53 515.94 266.65 515.00C264.76 514.06 265.71 514.18 263.82 513.59C261.94 513.00 257.71 511.71 255.35 511.47C253.00 511.24 251.35 511.59 249.71 512.18C248.06 512.76 246.69 513.12 245.47 515.00C244.25 516.88 242.84 520.41 242.36 523.47C241.89 526.53 241.66 530.29 242.65 533.35C243.64 536.41 245.71 539.71 248.29 541.82C250.88 543.94 254.18 545.31 258.18 546.06C262.18 546.81 267.82 545.87 272.29 546.34C276.76 546.81 282.06 548.34 285.00 548.88C287.94 549.42 289.12 549.47 289.94 549.59Z"/>
<path d="M246.88 566.95C248.29 566.18 252.06 563.19 255.35 562.29C258.65 561.40 263.12 561.00 266.65 561.59C270.18 562.18 273.47 563.71 276.53 565.82C279.59 567.94 283.16 571.00 285.00 574.29C286.84 577.59 287.07 581.82 287.54 585.59C288.01 589.35 288.25 593.12 287.82 596.88C287.40 600.65 286.88 605.47 285.00 608.18C283.12 610.88 279.12 613.12 276.53 613.12C273.94 613.12 271.24 610.41 269.47 608.18C267.71 605.94 266.65 603.00 265.94 599.71C265.24 596.41 265.82 592.18 265.24 588.41C264.65 584.65 264.06 580.18 262.41 577.12C260.76 574.06 257.94 571.75 255.35 570.06C252.76 568.36 248.29 567.47 246.88 566.95Z"/>
<path d="M412.06 473.35C409.94 475.61 404.22 482.16 399.35 486.88C394.49 491.61 387.00 497.02 382.88 501.71C378.76 506.39 376.37 511.14 374.65 515.00C372.92 518.86 374.29 521.59 372.53 524.88C370.76 528.18 367.35 531.47 364.06 534.76C360.76 538.06 355.59 541.35 352.76 544.65C349.94 547.94 348.06 551.47 347.12 554.53C346.18 557.59 346.69 561.00 347.12 563.00C347.54 565.00 349.24 565.94 349.66 566.53C352.06 564.76 358.36 559.82 364.06 555.94C369.75 552.06 377.00 547.12 383.82 543.24C390.65 539.35 397.94 535.82 405.00 532.65C412.06 529.47 418.65 526.69 426.18 524.18C433.71 521.66 446.18 518.65 450.18 517.54L450.18 507.94C450.65 506.53 451.59 502.18 453.00 499.47C454.41 496.76 457.71 493.00 458.65 491.71C455.82 490.88 446.29 488.18 441.71 486.76C437.12 485.35 434.18 483.24 431.12 483.24C428.06 483.24 425.35 484.53 423.35 486.76C421.35 489.00 419.59 493.82 419.12 496.65C418.65 499.47 419.71 501.94 420.53 503.71C421.35 505.47 423.00 506.76 424.06 507.24C425.12 507.71 426.41 506.65 426.88 506.53C426.53 507.24 426.06 509.59 424.76 510.76C423.47 511.94 421.47 513.59 419.12 513.59C416.76 513.59 412.76 512.88 410.65 510.76C408.53 508.65 407.00 504.65 406.41 500.88C405.82 497.12 406.18 492.76 407.12 488.18C408.06 483.59 411.24 475.82 412.06 473.35Z"/>
<path d="M328.76 621.16C330.88 618.06 336.53 608.69 341.47 602.53C346.41 596.36 351.82 589.59 358.41 584.18C365.00 578.76 373.24 573.71 381.00 570.06C388.76 566.41 396.29 564.65 405.00 562.29C413.71 559.94 423.82 557.94 433.24 555.94C442.65 553.94 453.00 552.18 461.47 550.29C469.94 548.41 478.18 546.29 484.06 544.65C489.94 543.00 493.00 541.94 496.76 540.41C500.53 538.88 505.00 536.29 506.65 535.47L506.65 621.16L328.76 621.16Z"/>
</g>

<rect x="77.5" y="216.5" width="3" height="503" fill="none" stroke="#50509a" stroke-width="1" stroke-dasharray="3 3"/>
<path d="M65.31 205.31L71.82 205.31L70.26 206.87L72.73 209.34L74.29 207.78L74.29 214.29L67.78 214.29L69.34 212.73L66.87 210.26L65.31 211.82ZM78.50 203.85L83.10 208.45L80.90 208.45L80.90 211.95L83.10 211.95L78.50 216.55L73.90 211.95L76.10 211.95L76.10 208.45L73.90 208.45ZM91.69 205.31L91.69 211.82L90.13 210.26L87.66 212.73L89.22 214.29L82.71 214.29L82.71 207.78L84.27 209.34L86.74 206.87L85.18 205.31ZM74.29 721.81L74.29 728.32L72.73 726.76L70.26 729.23L71.82 730.79L65.31 730.79L65.31 724.28L66.87 725.84L69.34 723.37L67.78 721.81ZM78.50 719.55L83.10 724.15L80.90 724.15L80.90 727.65L83.10 727.65L78.50 732.25L73.90 727.65L76.10 727.65L76.10 724.15L73.90 724.15ZM82.71 721.81L89.22 721.81L87.66 723.37L90.13 725.84L91.69 724.28L91.69 730.79L85.18 730.79L86.74 729.23L84.27 726.76L82.71 728.32ZM63.90 468.50L68.50 463.90L68.50 466.30L72.00 466.30L72.00 463.90L76.60 468.50L72.00 473.10L72.00 470.70L68.50 470.70L68.50 473.10ZM80.30 468.50L84.90 463.90L84.90 466.30L88.40 466.30L88.40 463.90L93.00 468.50L88.40 473.10L88.40 470.70L84.90 470.70L84.90 473.10Z" fill="#000"/>
<clipPath id="hcl"><rect x="82.93" y="460" width="3.04" height="20"/><rect x="89.01" y="460" width="3.04" height="20"/></clipPath>
<path d="M80.30 468.50L84.90 463.90L84.90 466.30L88.40 466.30L88.40 463.90L93.00 468.50L88.40 473.10L88.40 470.70L84.90 470.70L84.90 473.10Z" fill="#6464ff" clip-path="url(#hcl)"/>
<path d="M404.5 729.8V746.8L408 743.4L410 748Q411.5 749.2 413 747.7L411 742.3L415.8 741.7Z" fill="#fff" stroke="#000" stroke-width="1.1" stroke-linejoin="round"/>

</svg>
</div>
<div class="abs" style="left:1438px;top:159px;width:2px;height:626px;background:linear-gradient(90deg,#b5a89a 0,#b5a89a 1px,#e4dfd9 1px)"></div>
<svg class="abs" style="left:0;top:50px" width="1440" height="36" viewBox="0 50 1440 36">
<defs>
<linearGradient id="docg" x1="0" y1="0" x2="1" y2="1"><stop offset="0" stop-color="#fdfdfd"/><stop offset="1" stop-color="#d4d4d0"/></linearGradient>
<linearGradient id="blu" x1="0" y1="0" x2="1" y2="1"><stop offset="0" stop-color="#e8f0f8"/><stop offset="1" stop-color="#9cb8d4"/></linearGradient>
<radialGradient id="lens" cx=".35" cy=".3" r=".8"><stop offset="0" stop-color="#fff"/><stop offset="1" stop-color="#a4c4e4"/></radialGradient>
<linearGradient id="gold" x1="0" y1="0" x2="0" y2="1"><stop offset="0" stop-color="#d0b858"/><stop offset="1" stop-color="#a48c30"/></linearGradient>
<radialGradient id="grn" cx=".5" cy=".35" r=".7"><stop offset="0" stop-color="#a4b438"/><stop offset="1" stop-color="#5c6c18"/></radialGradient>
</defs>
<path d="M3 65.5H7M3 68.5H7M3 71.5H7" stroke="#b0a090" stroke-width="1" shape-rendering="crispEdges"/>
<path d="M153.5 57V78" stroke="#c6b8aa" stroke-width="1" shape-rendering="crispEdges"/>
<path d="M233.5 57V78" stroke="#c6b8aa" stroke-width="1" shape-rendering="crispEdges"/>
<path d="M313.5 57V78" stroke="#c6b8aa" stroke-width="1" shape-rendering="crispEdges"/>
<path d="M427.5 57V78" stroke="#c6b8aa" stroke-width="1" shape-rendering="crispEdges"/>
<path d="M541.5 57V78" stroke="#c6b8aa" stroke-width="1" shape-rendering="crispEdges"/>
<path d="M655.5 57V78" stroke="#c6b8aa" stroke-width="1" shape-rendering="crispEdges"/>
<path d="M735.5 57V78" stroke="#c6b8aa" stroke-width="1" shape-rendering="crispEdges"/>
<path d="M917.5 57V78" stroke="#c6b8aa" stroke-width="1" shape-rendering="crispEdges"/>
<g transform="translate(17,56)"><path d="M5.5 3.5H15L19 7.5V20.5H5.5Z" fill="url(#docg)" stroke="#aaa" stroke-width="1"/><path d="M15 3.5V7.5H19" fill="#fff" stroke="#999" stroke-width=".8"/><circle cx="7" cy="12" r="4" fill="#7c9428" stroke="#5a6c18" stroke-width=".8"/><path d="M7 9.6V14.4M4.6 12H9.4" stroke="#fff" stroke-width="1.5"/></g>
<g transform="translate(51,56)"><ellipse cx="12" cy="11.6" rx="8.6" ry="8.2" fill="url(#grn)" stroke="#3c4810" stroke-width="1.2"/><path d="M10.5 6H13.5V11H16.5L12 16L7.500 11H10.5Z" fill="#fff"/></g>
<g transform="translate(85,56)"><path d="M6 12L4.5 17.5V20H20.500V17.5L18.5 12Z" fill="#9c9c94" stroke="#555" stroke-width=".9"/><rect x="4.500" y="17" width="16" height="3.4" fill="#666" stroke="#444" stroke-width=".6"/><path d="M4 5.5C9 3 14 4.500 14.5 9.5H17.5L12.5 15.500L7.5 9.5H10.500C10 7 8 5.800 4 5.500Z" fill="url(#gold)" stroke="#7c6820" stroke-width=".8"/></g>
<g transform="translate(118,56)"><rect x="7.5" y="3.5" width="9.500" height="7" fill="#e8e8e4" stroke="#3c5488" stroke-width="1.200"/><path d="M4.500 10.5Q4.500 8.5 6.5 8.5H18Q20 8.500 20 10.5V16.500H4.500Z" fill="#d8d8d8" stroke="#999" stroke-width=".9"/><rect x="7.5" y="14" width="9.500" height="5.600" fill="#8c9c8c" stroke="#3c5488" stroke-width="1.100"/></g>
<g transform="translate(165,56)"><path d="M8.5 4.5H16L19.500 8V19.500H8.500Z" fill="url(#docg)" stroke="#000" stroke-width="1.200"/><path d="M16 4.500V8H19.500" fill="none" stroke="#000" stroke-width=".9"/><path d="M4 12.300H11" stroke="#000" stroke-width="1.300"/><path d="M10 9.500L13.600 12.300L10 15.100Z" fill="#000"/></g>
<g transform="translate(195,56)"><path d="M8.5 4.500H16L19.500 8V19.500H8.500Z" fill="url(#docg)" stroke="#000" stroke-width="1.200"/><path d="M16 4.500V8H19.500" fill="none" stroke="#000" stroke-width=".9"/><path d="M14 12.300H21" stroke="#000" stroke-width="1.300"/><path d="M20.500 9.500L24.100 12.300L20.500 15.100Z" fill="#000"/></g>
<g transform="translate(245,56)"><ellipse cx="11.500" cy="19.400" rx="6.500" ry="1" fill="#d4ccc4"/><path d="M20.900 5.700C19.500 4 17.500 3 15.700 3C12.500 2.900 9 5.500 8.200 9.400L4.200 9.400L9.400 18.600L15.900 11.500L13 10.300C13.300 8 15.500 6.300 20.900 5.700Z" fill="url(#gold)" stroke="#6a5a1c" stroke-width="1" stroke-linejoin="round"/></g>
<g transform="translate(303,56) scale(-1,1)"><ellipse cx="11.500" cy="19.400" rx="6.500" ry="1" fill="#d4ccc4"/><path d="M20.900 5.700C19.500 4 17.500 3 15.700 3C12.500 2.900 9 5.500 8.200 9.400L4.200 9.400L9.400 18.600L15.900 11.500L13 10.300C13.300 8 15.500 6.300 20.900 5.700Z" fill="url(#gold)" stroke="#6a5a1c" stroke-width="1" stroke-linejoin="round"/></g>
<g transform="translate(325,56)"><path d="M5 5L15 3.500L19.500 8L18.500 20L6 18.500Z" fill="#e8e8e6" stroke="#999" stroke-width=".8"/><path d="M4.500 6.500L16 4.500L20 9V19L8 20.500L5.500 18Z" fill="#e6e6e4" stroke="#a0a09c" stroke-width=".8"/><path d="M8 9H16M8 11.500H16M8 14H16M8 16.500H14" stroke="#b0b0ac" stroke-width=".8"/></g>
<g transform="translate(359,56)"><path d="M3.500 18.500L12 11.500L13.500 13L5 19.800Z" fill="#d0d0d0" stroke="#888" stroke-width=".8"/><path d="M4.500 19.800L12.500 10.500L14 12Z" fill="#e8e8e8" stroke="#888" stroke-width=".7"/><ellipse cx="15.500" cy="8" rx="2.400" ry="3.800" transform="rotate(35 15.500 8)" fill="none" stroke="#c82020" stroke-width="2"/><ellipse cx="17.500" cy="11.500" rx="2.400" ry="3.800" transform="rotate(70 17.500 11.500)" fill="none" stroke="#c82020" stroke-width="2"/><circle cx="12.400" cy="12.200" r="1" fill="#e8c020"/></g>
<g transform="translate(393,56)"><path d="M10 8L12 3L14 8Z" fill="#d08030" stroke="#a05a18" stroke-width=".8"/><path d="M7 10Q7 7.500 12 7.500Q17 7.500 17 10V17.500Q17 20 12 20Q7 20 7 17.500Z" fill="#ececec" stroke="#aaa" stroke-width=".9"/><rect x="7.500" y="11" width="9" height="5.500" fill="#6ca4d8"/></g>
<g transform="translate(439,56)"><path d="M16.500 16.500L18.700 18.500" stroke="#111" stroke-width="2.600" stroke-linecap="round"/><circle cx="11.400" cy="11.600" r="7.100" fill="url(#lens)" stroke="#222" stroke-width="1.300"/><rect x="7.500" y="8.500" width="8" height="6" fill="#fff" stroke="#000" stroke-width="1.100" stroke-dasharray="1.200 1.200"/></g>
<g transform="translate(473,56)"><path d="M16.500 16.500L18.700 18.500" stroke="#111" stroke-width="2.600" stroke-linecap="round"/><circle cx="11.400" cy="11.600" r="7.100" fill="url(#lens)" stroke="#222" stroke-width="1.300"/><rect x="7.500" y="7.500" width="4.600" height="4.600" fill="#f8e070" stroke="#554" stroke-width=".9"/><rect x="10.600" y="10.600" width="4.600" height="4.600" fill="#f8d840" stroke="#554" stroke-width=".9"/></g>
<g transform="translate(507,56)"><path d="M16.500 16.500L18.700 18.500" stroke="#111" stroke-width="2.600" stroke-linecap="round"/><circle cx="11.400" cy="11.600" r="7.100" fill="url(#lens)" stroke="#222" stroke-width="1.300"/><rect x="8.500" y="7.500" width="6" height="8" fill="url(#docg)" stroke="#333" stroke-width="1.100"/></g>
<g transform="translate(553,56)"><rect x="4.500" y="4.500" width="9" height="8" fill="url(#blu)" stroke="#5878a0" stroke-width="1"/><rect x="7.800" y="7.500" width="12" height="12" fill="url(#blu)" stroke="#000" stroke-width="1.300"/></g>
<g transform="translate(587,56)"><rect x="4.500" y="4.500" width="9" height="8" fill="url(#blu)" stroke="#5878a0" stroke-width="1"/><rect x="7.800" y="7.500" width="12" height="12" fill="url(#blu)" stroke="#000" stroke-width="1.300"/><rect x="10.500" y="13" width="6.500" height="4.800" fill="#f8c830" stroke="#000" stroke-width="1"/><rect x="11" y="13.500" width="5.500" height="1.800" fill="#fff"/><path d="M11.800 13V11.200Q11.800 9.500 13.750 9.500Q15.700 9.500 15.700 11.200V13" fill="none" stroke="#000" stroke-width="1.100"/></g>
<g transform="translate(621,56)"><rect x="4.500" y="4.500" width="9" height="8" fill="url(#blu)" stroke="#5878a0" stroke-width="1"/><rect x="7.800" y="7.500" width="12" height="12" fill="url(#blu)" stroke="#667" stroke-width="1.300"/><rect x="7.800" y="7.500" width="12" height="12" fill="#a8b8cc" stroke="#555" stroke-width="1.300"/><rect x="10.500" y="13.500" width="6.500" height="4.800" fill="#58a838" stroke="#222" stroke-width="1"/><rect x="11" y="14" width="5.500" height="1.600" fill="#fff"/><path d="M11.800 13.500V10.500Q11.800 9 13.500 9Q15 9 15.500 10" fill="none" stroke="#fff" stroke-width="1.300"/></g>
<g transform="translate(667,56)"><rect x="5.500" y="9" width="10" height="8.500" fill="#b0c8e4" stroke="#555" stroke-width="1"/><circle cx="14.800" cy="9" r="4.600" fill="url(#lens)" stroke="#667" stroke-width="1"/><path d="M3 3.500h2M19 3.500h2M3 19.800h2M19 19.800h2" stroke="#000" stroke-width="2"/></g>
<g transform="translate(701,56)"><rect x="5.500" y="9" width="10" height="8.500" fill="#f8d040" stroke="#555" stroke-width="1"/><rect x="8.500" y="12.500" width="2.200" height="2.200" fill="#000"/><circle cx="14.800" cy="9" r="4.600" fill="url(#lens)" stroke="#667" stroke-width="1"/><path d="M3 3.500h2M19 3.500h2M3 19.800h2M19 19.800h2" stroke="#000" stroke-width="2"/><path d="M9 3.500h2M14 3.500h2M3 8h2M19 13h2" stroke="#000" stroke-width="2"/></g>
<g transform="translate(747,56)"><path d="M3.500 3.500H20.500L3.500 20.500Z" fill="#fff"/><path d="M3 3H21L19.500 5H5V19.500L3 21Z" fill="#000"/><path d="M4 20.800L12 17L19.500 8L17.500 6L9.500 14.500Z" fill="#111"/><path d="M17.500 6L19.500 8L21.500 5.500V3.500H19.500Z" fill="#f8b010"/></g>
<text transform="translate(783.300,76.800) scale(1.08,1)" font-family="Liberation Serif,DejaVu Serif,serif" font-weight="bold" font-size="26" fill="#000" stroke="#000" stroke-width=".5">T</text>
<path d="M818.500 70 L831 69 L836 74 L824 75 Z" fill="#f4f4f4" stroke="#222" stroke-width="1.100" stroke-linejoin="round"/>
<path d="M818.500 66 L831 65 L836 70 L824 71 Z" fill="#f4f4f4" stroke="#222" stroke-width="1.100" stroke-linejoin="round"/>
<path d="M818.500 62 L831 61 L836 66 L824 67 Z" fill="#f4f4f4" stroke="#222" stroke-width="1.100" stroke-linejoin="round"/>
<g transform="translate(849,56)"><rect x="3.500" y="3.500" width="17" height="17" fill="#f0f0ee" stroke="#000" stroke-width="1.300"/><rect x="4.200" y="4.200" width="15.600" height="2.400" fill="#78a8d8"/><path d="M4 7.200H20" stroke="#000" stroke-width="1"/><path d="M10 10L6.500 13.300L10 16.600M14 10L17.500 13.300L14 16.600" fill="none" stroke="#222" stroke-width="1.300"/></g>
<g transform="translate(883,56)"><path d="M3.500 3V21" stroke="#d81818" stroke-width="1.300"/><rect x="5.500" y="3.500" width="6" height="4.500" fill="#a8c4e4" stroke="#445" stroke-width="1"/><rect x="5.500" y="10" width="15" height="3.500" fill="#88b0e0" stroke="#445" stroke-width="1"/><rect x="5.500" y="15.500" width="11" height="4.500" fill="#a8c4e4" stroke="#445" stroke-width="1"/></g>
<g transform="translate(929,56)"><path d="M19.500 5L20.500 6.500L12 14C12.500 16 11.500 18 9.500 18.500C8 19 6.500 18.500 6 18L8.500 16L8 14L6 13.500L3.500 15.500C3 13.500 4 11.500 6 11C7.500 10.500 9 11 10 11.500Z" fill="#b4b0a4" stroke="#666" stroke-width=".9" stroke-linejoin="round"/><path d="M16.500 7.500L18 9" stroke="#d82020" stroke-width="1.800"/></g>
<g transform="translate(962,56)" opacity=".85"><path d="M3.500 1.500H15L21 7.500V22H3.500Z" fill="#ecebe8" stroke="#c4c0bc" stroke-width="1"/><path d="M15 1.500V7.500H21" fill="#fafafa" stroke="#c4c0bc" stroke-width=".9"/><path d="M20 20L13 13.500C13.500 11.500 12.500 9.500 10.500 9L12.500 11.500L11 13.500L8.500 13C9 15 11 16 13 15.500L19 21.500Z" fill="#fff" stroke="#b8b4b0" stroke-width=".9"/></g>
</svg>
<div class="tbtn" style="left:13px;top:90px;width:28px;height:28px"></div>
<div class="tbtn" style="left:217px;top:90px;width:28px;height:28px"></div>
<div class="tbtn" style="left:499px;top:90px;width:28px;height:28px"></div>
<div class="tbtn" style="left:529px;top:90px;width:28px;height:28px"></div>
<svg class="abs" style="left:0;top:88px" width="1440" height="34" viewBox="0 88 1440 34">
<path d="M3 101.5H7M3 104.5H7M3 107.5H7" stroke="#b0a090" stroke-width="1" shape-rendering="crispEdges"/>
<path d="M47.5 95V113" stroke="#c6b8aa" stroke-width="1" shape-rendering="crispEdges"/>
<path d="M209.5 95V113" stroke="#c6b8aa" stroke-width="1" shape-rendering="crispEdges"/>
<path d="M461.5 95V113" stroke="#c6b8aa" stroke-width="1" shape-rendering="crispEdges"/>
<path d="M24.500 101.500L30.500 107.500" stroke="#000" stroke-width="1.400"/><path d="M31.800 108.800L28 107.800L30.800 105Z" fill="#000"/>
<path d="M22.9 97.6L25.3 100L22.9 102.4L20.5 100Z" fill="#c0c0ff" stroke="#0000ff" stroke-width="1.4"/>
<path d="M32.9 107.6L35.3 110L32.9 112.4L30.5 110Z" fill="#a0c8a0" stroke="#008000" stroke-width="1.4"/>
<path d="M63.500 99V112" stroke="#000" stroke-width="1.600" stroke-dasharray="2.500 1.300"/><path d="M66 97.800H78" stroke="#000" stroke-width="1.600" stroke-dasharray="2.500 1.300"/>
<path d="M63.4 95.3L65.9 97.8L63.4 100.3L60.9 97.8Z" fill="#a0a0ff" stroke="#0000ff" stroke-width="1.4"/>
<g stroke="#b4b0ac" stroke-width="1" fill="none" stroke-dasharray="2 1.200"><path d="M105.500 96V110.500H91"/><path d="M134.500 96V110.500H120"/><path d="M164.500 96V109.500H150"/><path d="M194.500 96V109.500H181"/></g>
<circle cx="134.500" cy="110.500" r="2.200" fill="#e4e0dc" stroke="#b4b0ac"/><ellipse cx="164.500" cy="100" rx="1.800" ry="2.400" fill="#c8c4c0" stroke="#b4b0ac"/><circle cx="185" cy="100" r="1.900" fill="#ece8e4" stroke="#b4b0ac"/>
<path d="M223.800 105C225 101 228 99.300 231.500 99.300M229 104.300C230 109 235 112 240 112.700" fill="none" stroke="#444" stroke-width="1.100"/>
<path d="M231.9 96.8L234.4 99.3L231.9 101.8L229.4 99.3Z" fill="#c8c8ff" stroke="#0000ff" stroke-width="1.4"/>
<path d="M253.500 96.800C258 97.500 262 99.500 264 103C265.500 106 263 109.500 261 109.800C264 110.500 268 109 269.300 104.800" fill="none" stroke="#008000" stroke-width="1.800"/>
<path d="M283.300 111.200L299.400 96M283.300 106L299.400 101.300" stroke="#b8b4b0" stroke-width="1" fill="none"/><circle cx="291.300" cy="103.700" r="1.900" fill="#d0ccc8" stroke="#aaa" stroke-width=".8"/>
<path d="M312.400 95.800C318 97 323 100 324.200 104C324.500 107 322 109 320.500 109.400C324 109.800 327.500 108 328.500 104" fill="none" stroke="#555" stroke-width="1.100"/>
<path d="M320.3 106.8L322.9 109.4L320.3 112L317.7 109.4Z" fill="#a8a8e8" stroke="#008000" stroke-width="1.4"/>
<path d="M343 95.600C346 97 349 97.500 351.500 99C354.500 101 354.800 104 353 106.500C351.500 108.500 351.500 109.500 353.500 109.500C356 109.500 358 107 358.400 104" fill="none" stroke="#555" stroke-width="1.100"/>
<rect x="348.300" y="96.300" width="4" height="4" fill="#a8a8e8" stroke="#008000" stroke-width="1.300"/>
<path d="M372.700 112L388 96.700" stroke="#555" stroke-width="1.100"/><path d="M373.800 110.800L377.300 104.800M376.300 112.300L379.800 106.300M381.500 103L385 97M384 104.500L387.500 98.500" stroke="#d01818" stroke-width="1.200"/><circle cx="380.400" cy="104.300" r="1.900" fill="#a0c8a0" stroke="#008000" stroke-width="1.300"/>
<path d="M416.500 95V109.500H402" fill="none" stroke="#666" stroke-width="1.200"/><circle cx="408.200" cy="100.800" r="1.800" fill="#d8f0d8" stroke="#008000" stroke-width="1.200"/>
<path d="M438 97.500V104M434.800 100.800H441.200" stroke="#000" stroke-width="1.200"/><path d="M446.700 95V109" stroke="#000" stroke-width="1.200" stroke-dasharray="2.200 1.200"/><path d="M433 109H446" stroke="#000" stroke-width="1.400" stroke-dasharray="1.600 1"/>
<defs><linearGradient id="pgb" x1="0" y1="0" x2=".6" y2="1"><stop offset="0" stop-color="#fff"/><stop offset=".5" stop-color="#f4f4f4"/><stop offset="1" stop-color="#b0b0b0"/></linearGradient></defs><rect x="476.500" y="96.500" width="12" height="16" fill="url(#pgb)" stroke="#000" stroke-width="1"/><path d="M488.500 97V112.500H477" fill="none" stroke="#000" stroke-width="1.600"/>
<path d="M506.8 96.400V113.600 M505 98.3H523 M511.5 96.400V113.600 M505 102.8H523 M516.2 96.400V113.600 M505 107.3H523 M520.9 96.400V113.600 M505 111.8H523" stroke="#0000ff" stroke-width="1.300" fill="none"/>
<path d="M536.900 96.400V113.600M542.200 113.800L548.600 96.400M550.600 96.400V113.600" stroke="#2020ff" stroke-width="1.300" fill="none"/>
</svg>
<div class="tbtn" style="left:929px;top:124px;width:32px;height:32px"></div>
<div class="tbtn" style="left:963px;top:124px;width:32px;height:32px"></div>
<div class="tbtn" style="left:997px;top:124px;width:32px;height:32px"></div>
<div class="tbtn" style="left:1031px;top:124px;width:32px;height:32px"></div>
<div class="abs" style="left:805px;top:124px;width:49px;height:32px;border:1px solid #a09488;border-radius:4px;background:linear-gradient(#f7f5f3,#eeebe7 50%,#e6e2dd)"><span class="lbl sm" style="left:5.500px;top:8px">px</span><div class="abs" style="left:27px;top:4px;width:1px;height:22px;background:#c4b8ac"></div><svg class="abs" style="left:31px;top:10px" width="12" height="10"><path d="M1.500 2.500L6 7L10.500 2.500" fill="none" stroke="#333" stroke-width="1.500"/></svg></div>
<span class="lbl sm" style="left:430.500px;top:133px">X</span><div class="spin" style="left:443px;top:129px;width:64px"><span>-94,241</span><i></i></div>
<span class="lbl sm" style="left:516px;top:133px">Y</span><div class="spin" style="left:529px;top:129px;width:64px"><span>202,444</span><i></i></div>
<span class="lbl sm" style="left:603.500px;top:133px">Ш</span><div class="spin" style="left:619px;top:129px;width:64px"><span>7,500</span><i></i></div>
<span class="lbl sm" style="left:726.500px;top:133px">В</span><div class="spin" style="left:739px;top:129px;width:64px"><span>1242,59</span><i></i></div>
<span class="lbl sm" style="left:875px;top:133px">Менять:</span>
<svg class="abs" style="left:0;top:124px" width="1440" height="34" viewBox="0 124 1440 34">
<defs><linearGradient id="org" x1="0" y1="0" x2="0" y2="1"><stop offset="0" stop-color="#fff4e0"/><stop offset=".5" stop-color="#fcd088"/><stop offset="1" stop-color="#f8a830"/></linearGradient></defs>
<path d="M3 136.500H7M3 139.500H7M3 142.500H7" stroke="#b0a090" stroke-width="1" shape-rendering="crispEdges"/>
<path d="M119.500 129V150" stroke="#c6b8aa" stroke-width="1" shape-rendering="crispEdges"/>
<path d="M267.500 129V150" stroke="#c6b8aa" stroke-width="1" shape-rendering="crispEdges"/>
<path d="M415.500 129V150" stroke="#c6b8aa" stroke-width="1" shape-rendering="crispEdges"/>
<path d="M860.500 129V150" stroke="#c6b8aa" stroke-width="1" shape-rendering="crispEdges"/>
<g transform="translate(17,127)"><path d="M4.500 21.500V3.500H15L20 8.500V21.500Z" fill="#f4f4f4" stroke="#9a9a98" stroke-width="1"/><path d="M3.500 22.500H21" stroke="#d0ccc8" stroke-width="1"/><path d="M15 3.500V8.500H20" fill="#fff" stroke="#aaa" stroke-width=".8"/><path d="M6.500 7H13M6.500 9.500H17M6.500 12H17M6.500 14.500H15M6.500 17H13M6.500 19.500H12" stroke="#78a0d0" stroke-width="1.300"/><path d="M14 15.500H18M14 21H18M16 15.500V21" stroke="#000" stroke-width="1.200"/></g>
<g transform="translate(51,127)"><rect x="4.500" y="5.500" width="15" height="15" fill="none" stroke="#000" stroke-width="1.200" stroke-dasharray="1.800 1.200"/>
<path d="M7 16.5 L15 16 L17.500 19 L9.500 19.5 Z" fill="#f0f0f0" stroke="#333" stroke-width="1"/>
<path d="M7 13 L15 12.5 L17.500 15.5 L9.500 16 Z" fill="#f0f0f0" stroke="#333" stroke-width="1"/>
<path d="M7 9.5 L15 9 L17.500 12 L9.500 12.5 Z" fill="#f0f0f0" stroke="#333" stroke-width="1"/>
</g>
<g transform="translate(85,127)"><rect x="4.500" y="5.500" width="15" height="15" fill="none" stroke="#e00000" stroke-width="1.200" stroke-dasharray="1.800 1.200"/><rect x="6.800" y="12" width="8.500" height="6.300" fill="#f8d040" stroke="#665" stroke-width="1"/><circle cx="13.500" cy="11.200" r="3.900" fill="url(#lens)" stroke="#456" stroke-width="1"/></g>
<ellipse cx="141" cy="148.800" rx="6" ry="1.200" fill="#d8d0c8"/><g transform="translate(133,129.300)"><path d="M18.600 1.500H12C6.500 1.500 5 6 5 10.500H0.800L8 18.500L15.200 10.500H11C11 8.500 11.500 7 13.500 7H18.600Z" fill="url(#org)" stroke="#d87800" stroke-width="1.300" stroke-linejoin="round"/></g>
<ellipse cx="179" cy="148.800" rx="6" ry="1.200" fill="#d8d0c8"/><g transform="translate(187,129.300) scale(-1,1)"><path d="M18.600 1.500H12C6.500 1.500 5 6 5 10.500H0.800L8 18.500L15.200 10.500H11C11 8.500 11.500 7 13.500 7H18.600Z" fill="url(#org)" stroke="#d87800" stroke-width="1.300" stroke-linejoin="round"/></g>
<ellipse cx="211" cy="148.300" rx="8" ry="1.200" fill="#d8d0c8"/><path d="M200.500 139.800L207.500 133V137H214.500V133L221.500 139.800L214.500 146.600V142.600H207.500V146.600Z" fill="url(#org)" stroke="#d87800" stroke-width="1.300" stroke-linejoin="round"/>
<path d="M244.300 129.800L251.300 136.800H247.300V143H251.300L244.300 150L237.300 143H241.300V136.800H237.300Z" fill="url(#org)" stroke="#d87800" stroke-width="1.300" stroke-linejoin="round"/>
<g stroke="#000" stroke-width="1.500" fill="none"><path d="M291.500 132.700H299M291.500 135.600H299M291.500 138.500H299M291.500 141.400H299"/><path d="M287 131.500V141" stroke-width="1.300"/></g><path d="M284.200 139L287 143.300L289.800 139Z" fill="#000"/><rect x="283.500" y="144.500" width="15.500" height="2.300" fill="#f0c030" stroke="#333" stroke-width=".7"/>
<g stroke="#000" stroke-width="1.500" fill="none"><path d="M325.500 132.700H333M323 135.600H333M325.500 144.400H333M323 147H333" /></g><rect x="317.500" y="140" width="15.500" height="2.300" fill="#f0c030" stroke="#333" stroke-width=".7"/><path d="M318 137H322.500" stroke="#000" stroke-width="1.200"/><path d="M317.300 137L320.300 134.600V139.400Z" fill="#000"/><path d="M321.500 134.500V139.500" stroke="#000" stroke-width="1"/>
<g stroke="#000" stroke-width="1.500" fill="none"><path d="M351 132.700H359M351 139.300H362M351 142.200H359M351 145.100H362"/></g><rect x="351.200" y="135" width="15.500" height="2.300" fill="#88b0e0" stroke="#333" stroke-width=".7"/><path d="M362 143H366" stroke="#000" stroke-width="1.200"/><path d="M364.600 138.800L367 141.800H362.200Z" fill="#000"/>
<g stroke="#000" stroke-width="1.500" fill="none"><path d="M385 137.200H393M385 140.100H393M385 143H393M385 145.900H393"/><path d="M398.300 137V147" stroke-width="1.300"/></g><path d="M395.500 138.800L398.300 134.500L401.100 138.800Z" fill="#000"/><rect x="385.200" y="132.200" width="15.500" height="2.300" fill="#a8c4e4" stroke="#333" stroke-width=".7"/>
<g transform="translate(695.5,134.5)"><path d="M1.500 5V3.500Q1.500 0.800 4.500 0.800Q7.500 0.800 7.500 3.500V6" fill="none" stroke="#666" stroke-width="1.200"/><rect x="2.800" y="5" width="7.500" height="5.800" rx=".8" fill="#f4e8a8" stroke="#555" stroke-width="1"/><rect x="3.500" y="5.700" width="6" height="1.600" fill="#fffbe8"/></g>
<path d="M939.800 135.800H951.800V140.500" fill="none" stroke="#000" stroke-width="1.800"/><path d="M939.800 139.300H948.200V142" fill="none" stroke="#000" stroke-width="1"/>
<path d="M973.800 135.300H980Q985.600 135.300 985.600 141" fill="none" stroke="#000" stroke-width="1.200"/><path d="M973.800 138.800H978Q982.600 138.800 982.600 142" fill="none" stroke="#000" stroke-width="1.200"/>
<defs><linearGradient id="af3" x1="0" y1="0" x2="0" y2="1"><stop offset="0" stop-color="#fff"/><stop offset="1" stop-color="#6090c8"/></linearGradient></defs><rect x="1008" y="136.500" width="10" height="5.500" fill="url(#af3)"/><path d="M1008 135.600H1019.800V141" fill="none" stroke="#000" stroke-width="1.600"/>
<path d="M1042 135.200H1053.800V140" fill="none" stroke="#000" stroke-width="1.200" /><path d="M1042.500 138.200H1053" stroke="#000" stroke-width="2.600" stroke-dasharray="1.600 1.400"/><path d="M1042 140.200H1054" stroke="#000" stroke-width="1"/>
<path d="M941.9 144.700H949.9" stroke="#000" stroke-width="1.200" stroke-dasharray="1.500 1"/><path d="M949.5 142.400L952.5 144.700L949.5 147Z" fill="#000"/>
<path d="M975.9 144.700H983.9" stroke="#000" stroke-width="1.200" stroke-dasharray="1.500 1"/><path d="M983.5 142.400L986.5 144.700L983.5 147Z" fill="#000"/>
<path d="M1009.9 144.700H1017.9" stroke="#000" stroke-width="1.200" stroke-dasharray="1.500 1"/><path d="M1017.5 142.400L1020.5 144.700L1017.5 147Z" fill="#000"/>
<path d="M1043.9 144.700H1051.9" stroke="#000" stroke-width="1.200" stroke-dasharray="1.500 1"/><path d="M1051.5 142.400L1054.5 144.700L1051.5 147Z" fill="#000"/>
</svg>
<div class="abs" style="left:1436px;top:139px;width:4px;height:2px;background:linear-gradient(#fff 0,#fff 1px,#c6b8aa 1px)"></div>
<div class="abs" style="left:0;top:785px;width:1432px;height:1px;background:#b8ac9e"></div>
<div class="abs" style="left:0;top:786px;width:1428px;height:16px;background:linear-gradient(90deg,#fff 0,#fff 17px,#000000 17px,#000000 33px,#1a1a1a 33px,#1a1a1a 49px,#333333 49px,#333333 65px,#4d4d4d 65px,#4d4d4d 81px,#666666 81px,#666666 97px,#808080 97px,#808080 113px,#999999 113px,#999999 129px,#b3b3b3 129px,#b3b3b3 145px,#cccccc 145px,#cccccc 161px,#e6e6e6 161px,#e6e6e6 177px,#ececec 177px,#ececec 193px,#f2f2f2 193px,#f2f2f2 209px,#f9f9f9 209px,#f9f9f9 225px,#ffffff 225px,#ffffff 241px,#800000 241px,#800000 257px,#ff0000 257px,#ff0000 273px,#808000 273px,#808000 289px,#ffff00 289px,#ffff00 305px,#008000 305px,#008000 321px,#00ff00 321px,#00ff00 337px,#008080 337px,#008080 353px,#00ffff 353px,#00ffff 369px,#000080 369px,#000080 385px,#0000ff 385px,#0000ff 401px,#800080 401px,#800080 417px,#ff00ff 417px,#ff00ff 433px,#2b0000 433px,#2b0000 449px,#550000 449px,#550000 465px,#800000 465px,#800000 481px,#aa0000 481px,#aa0000 497px,#d40000 497px,#d40000 513px,#ff0000 513px,#ff0000 529px,#ff2a2a 529px,#ff2a2a 545px,#ff5555 545px,#ff5555 561px,#ff8080 561px,#ff8080 577px,#ffaaaa 577px,#ffaaaa 593px,#ffd5d5 593px,#ffd5d5 609px,#280b0b 609px,#280b0b 625px,#501616 625px,#501616 641px,#782121 641px,#782121 657px,#a02c2c 657px,#a02c2c 673px,#c83737 673px,#c83737 689px,#d35f5f 689px,#d35f5f 705px,#de8787 705px,#de8787 721px,#e9afaf 721px,#e9afaf 737px,#f4d7d7 737px,#f4d7d7 753px,#241c1c 753px,#241c1c 769px,#483737 769px,#483737 785px,#6c5353 785px,#6c5353 801px,#916f6f 801px,#916f6f 817px,#ac9393 817px,#ac9393 833px,#c8b7b7 833px,#c8b7b7 849px,#e3dbdb 849px,#e3dbdb 865px,#2b1100 865px,#2b1100 881px,#552200 881px,#552200 897px,#803300 897px,#803300 913px,#aa4400 913px,#aa4400 929px,#d45500 929px,#d45500 945px,#ff6600 945px,#ff6600 961px,#ff7f2a 961px,#ff7f2a 977px,#ff9955 977px,#ff9955 993px,#ffb380 993px,#ffb380 1009px,#ffccaa 1009px,#ffccaa 1025px,#ffe6d5 1025px,#ffe6d5 1041px,#28170b 1041px,#28170b 1057px,#502d16 1057px,#502d16 1073px,#784421 1073px,#784421 1089px,#a05a2c 1089px,#a05a2c 1105px,#c87137 1105px,#c87137 1121px,#d38d5f 1121px,#d38d5f 1137px,#deaa87 1137px,#deaa87 1153px,#e9c6af 1153px,#e9c6af 1169px,#f4e3d7 1169px,#f4e3d7 1185px,#241f1c 1185px,#241f1c 1201px,#483e37 1201px,#483e37 1217px,#6c5d53 1217px,#6c5d53 1233px,#917c6f 1233px,#917c6f 1249px,#ac9d93 1249px,#ac9d93 1265px,#c8beb7 1265px,#c8beb7 1281px,#e3dedb 1281px,#e3dedb 1297px,#2b2200 1297px,#2b2200 1313px,#554400 1313px,#554400 1329px,#806600 1329px,#806600 1345px,#aa8800 1345px,#aa8800 1361px,#d4aa00 1361px,#d4aa00 1377px,#ffcc00 1377px,#ffcc00 1393px,#ffd42a 1393px,#ffd42a 1409px,#ffdd55 1409px,#ffdd55 1425px,#ffe680 1425px,#ffe680 1428px)"></div>
<svg class="abs" style="left:0;top:786px" width="17" height="16"><rect x="0" y="0" width="17" height="16" fill="#fff"/><path d="M1 0.500L16.500 15.500M16.500 0.500L1 15.500" stroke="#8b1a1a" stroke-width="1.300"/></svg>
<div class="abs" style="left:0;top:802px;width:1428px;height:1px;background:#a89c8e"></div>
<svg class="abs" style="left:1430px;top:787px" width="9" height="10"><path d="M6.500 1.500L2.500 5L6.500 8.500" fill="none" stroke="#222" stroke-width="1.400"/></svg>
<div class="abs" style="left:0;top:806px;width:1428px;height:15px;border:1px solid #b4a89c;border-radius:4px;background:linear-gradient(#e4dfd9,#ebe7e2)"></div>
<div class="abs" style="left:0;top:806px;width:15px;height:15px;border:1px solid #b4a89c;border-radius:4px 0 0 4px;background:linear-gradient(#fbfaf9,#ece8e4)"><svg class="abs" style="left:3px;top:2px" width="8" height="9"><path d="M5.500 1L2 4.500L5.500 8" fill="none" stroke="#b0a8a0" stroke-width="1.300"/></svg></div>
<div class="abs" style="left:14px;top:806px;width:289px;height:15px;border:1px solid #a4988c;border-radius:2px;background:linear-gradient(#faf9f7,#efece8 50%,#e6e2dd)"><div class="abs" style="left:140px;top:4px;width:8px;height:5px;background:repeating-linear-gradient(90deg,#8c8074 0,#8c8074 1px,transparent 1px,transparent 3px)"></div></div>
<div class="abs" style="left:1413px;top:806px;width:15px;height:15px;border:1px solid #a4988c;border-radius:0 4px 4px 0;background:linear-gradient(#fbfaf9,#ece8e4)"><svg class="abs" style="left:3px;top:2px" width="8" height="9"><path d="M2.500 1L6 4.500L2.500 8" fill="none" stroke="#333" stroke-width="1.400"/></svg></div>
<span class="lbl sm" style="left:2.500px;top:821.500px">Заливка:</span>
<span class="lbl sm" style="left:2.500px;top:834.500px">Обводка:</span>
<div class="abs" style="left:58px;top:822px;width:64px;height:13px;background:#808000"></div>
<span class="lbl sm" style="left:69px;top:834.500px;font-style:italic">Нет</span>
<span class="lbl sm" style="left:105px;top:834.500px">0,1</span>
<span class="lbl sm" style="left:126.500px;top:829px">Н:</span>
<div class="spin up" style="left:141px;top:825px;width:35px"><span>100</span><i></i></div>
<div class="abs" style="left:181px;top:823px;width:1px;height:24px;background:#c0b0a0"></div>
<svg class="abs" style="left:186px;top:828px" width="14" height="14" viewBox="0 0 14 14"><path d="M0.800 7.500C3 3.800 11 3.800 13.200 7.500C11 10.800 3 10.800 0.800 7.500Z" fill="#fff" stroke="#111" stroke-width="1"/><circle cx="7" cy="7.300" r="2.300" fill="#111"/><path d="M3 3.800L2 1.800M5.500 3L5 0.800M8.500 3L9 0.800M11 3.800L12 1.800" stroke="#111" stroke-width="1"/></svg>
<svg class="abs" style="left:207px;top:828px" width="13" height="14" viewBox="0 0 13 14"><path d="M1.500 6.500V4.500Q1.500 1.500 4.500 1.500Q7.500 1.500 7.500 4.500V7" fill="none" stroke="#444" stroke-width="1.300"/><rect x="3" y="6.500" width="8" height="6" rx=".8" fill="#f4e8a0" stroke="#444" stroke-width="1"/><rect x="3.700" y="7.200" width="6.600" height="1.700" fill="#fffbe8"/></svg>
<div class="abs" style="left:224px;top:823px;width:90px;height:25px;border:1px solid #a09488;border-radius:4px;background:linear-gradient(#f7f5f3,#eeebe7 50%,#e6e2dd)"><span class="lbl" style="left:6px;top:4.500px;font-weight:bold;font-size:11.100px">•Layer 1</span><div class="abs" style="left:66px;top:3px;width:1px;height:17px;background:#c4b8ac"></div><svg class="abs" style="left:70px;top:7px" width="14" height="10"><path d="M1.500 2L7 7.500L12.500 2" fill="none" stroke="#333" stroke-width="1.500"/></svg></div>
<span class="lbl" style="left:320px;top:827px;font-size:13.300px"><b>Прямоугольник</b> в слое <b>Layer 1</b>. Щелчок по объекту переключает стрелки масштабирования/вращения.</span>
<div class="abs" style="left:1284px;top:823px;width:1px;height:24px;background:#c0b0a0"></div>
<span class="lbl sm" style="left:1288px;top:822px">X:</span><span class="lbl sm" style="left:1307px;top:822px;letter-spacing:.2px">713,28</span>
<span class="lbl sm" style="left:1288px;top:835px">Y:</span><span class="lbl sm" style="left:1307px;top:835px;letter-spacing:.2px">175,24</span>
<span class="lbl sm" style="left:1351.500px;top:828.500px">Z:</span>
<div class="spin" style="left:1365px;top:824px;width:55px"><span style="left:10px">40%</span><i></i></div>
<svg class="abs" style="left:1426px;top:836px" width="14" height="14"><g fill="#b8aca0"><rect x="11" y="2" width="2" height="2"/><rect x="8" y="5" width="2" height="2"/><rect x="11" y="5" width="2" height="2"/><rect x="5" y="8" width="2" height="2"/><rect x="8" y="8" width="2" height="2"/><rect x="11" y="8" width="2" height="2"/><rect x="2" y="11" width="2" height="2"/><rect x="5" y="11" width="2" height="2"/><rect x="8" y="11" width="2" height="2"/><rect x="11" y="11" width="2" height="2"/></g></svg>
<div class="abs" style="left:0;top:849px;width:1440px;height:1px;background:#b0a498"></div>
<div id="dlg" class="abs" style="left:635px;top:199px;width:663px;height:511px">
<svg class="abs" style="left:7.5px;top:4px" width="13" height="16" viewBox="0 0 13 16"><path d="M0.500 6.500L5.500 9L12.500 6.500V12.700L5.500 15.800L0.500 12.700Z" fill="#1c1418"/><path d="M1 7.500L5.500 9.800V15.200L1 12.400Z" fill="#b02432"/><path d="M5.500 9.800L12 7.400V12.400L5.500 15.200Z" fill="#8e1422"/><path d="M0.500 4.800L6.500 2.800L12.500 4.800V7.300L5.500 10L0.500 7.300Z" fill="#2e2e2a"/><path d="M2.500 1.600Q6.500 -0.600 10.500 1.600V4.800Q6.500 6.800 2.500 4.800Z" fill="#161616"/><ellipse cx="6.500" cy="1.900" rx="2.800" ry="1" fill="#2c2c2c"/><ellipse cx="9.300" cy="10.600" rx="2" ry="1.250" transform="rotate(-20 9.300 10.600)" fill="#e8e0dc"/><ellipse cx="9.400" cy="10.500" rx=".9" ry=".6" transform="rotate(-20 9.400 10.500)" fill="#443"/></svg>
<span class="lbl" style="left:212px;top:2.4px;font-weight:bold;font-size:13.650px;color:#222">Создать узор из клонов</span>
<div class="abs dbtn" style="left:581px;top:2px"><svg class="abs" style="left:0;top:0" width="22" height="16"><path d="M8 11.500H15.500" stroke="#111" stroke-width="2"/></svg></div>
<div class="abs dbtn" style="left:607px;top:2px"><svg class="abs" style="left:0;top:0" width="22" height="16"><rect x="8.300" y="5.300" width="7" height="6.600" fill="none" stroke="#111" stroke-width="1.200"/><path d="M7.700 5.300H15.900" stroke="#111" stroke-width="2"/></svg></div>
<div class="abs dbtn" style="left:633px;top:2px"><svg class="abs" style="left:0;top:0" width="22" height="16"><path d="M8.300 5L15.300 12M15.300 5L8.300 12" stroke="#111" stroke-width="2.200"/></svg></div>
<div class="abs tab" style="left:10px;top:30px;width:88px;height:25px"><span style="left:4.3px">С<u>и</u>мметрия</span></div>
<div class="abs tab" style="left:180px;top:30px;width:71px;height:25px"><span style="left:3.6px"><u>М</u>асштаб</span></div>
<div class="abs tab" style="left:250px;top:30px;width:67px;height:25px"><span style="left:4px"><u>П</u>оворот</span></div>
<div class="abs tab" style="left:316px;top:30px;width:226px;height:25px"><span style="left:4px"><u>Р</u>азмывание и непрозрачность</span></div>
<div class="abs tab" style="left:541px;top:30px;width:43px;height:25px"><span style="left:3.5px">Цвет</span></div>
<div class="abs tab" style="left:583px;top:30px;width:68px;height:25px"><span style="left:3.5px"><u>О</u>бводка</span></div>
<div class="abs" style="left:10px;top:54px;width:641px;height:292px;border:1px solid #a89c90;border-radius:0 2px 2px 2px;background:#efebe7;box-shadow:inset 1px 1px 0 #fbfaf9"></div>
<div class="abs tab act" style="left:97px;top:29px;width:84px;height:28px"><span style="left:4.6px">Сме<u>щ</u>ение</span></div>
<svg class="abs" style="left:160px;top:70px" width="12" height="12" viewBox="0 0 12 12"><g fill="#a8bcd0" stroke="#444" stroke-width=".9"><rect x=".9" y=".9" width="10.200" height="2.600" rx=".8"/><rect x=".9" y="4.700" width="10.200" height="2.600" rx=".8"/><rect x=".9" y="8.500" width="10.200" height="2.600" rx=".8"/></g></svg>
<span class="lbl xs" style="left:177.5px;top:69.5px">На строку:</span>
<svg class="abs" style="left:252px;top:70px" width="12" height="12" viewBox="0 0 12 12"><g fill="#d8dce0" stroke="#444" stroke-width=".9"><rect x=".9" y=".9" width="2.600" height="10.200" rx=".8"/><rect x="4.700" y=".9" width="2.600" height="10.200" rx=".8"/><rect x="8.500" y=".9" width="2.600" height="10.200" rx=".8"/></g></svg>
<span class="lbl xs" style="left:268.3px;top:69.5px">На столбец:</span>
<span class="lbl xs" style="left:349.4px;top:69.5px">Случайно:</span>
<div class="abs" style="left:14px;top:94.6px;width:150px;text-align:center;font-weight:bold;font-size:13.600px;white-space:nowrap">Смещение по X:</div>
<div class="spin dsp " style="left:161px;top:90px;width:56px"><span style="left:3.7px">0,0</span><i></i></div>
<span class="lbl" style="left:219.5px;top:89.7px">%</span>
<div class="spin dsp " style="left:252px;top:90px;width:56px"><span style="left:3.7px">100,0</span><i></i></div>
<span class="lbl" style="left:310.5px;top:89.7px">%</span>
<div class="spin dsp dn" style="left:351px;top:90px;width:56px"><span style="left:3.7px">0,0</span><i></i></div>
<span class="lbl" style="left:409.5px;top:89.7px">%</span>
<div class="abs" style="left:14px;top:127.6px;width:150px;text-align:center;font-weight:bold;font-size:13.600px;white-space:nowrap">Смещение по Y:</div>
<div class="spin dsp " style="left:161px;top:123px;width:56px"><span style="left:3.7px">0,0</span><i></i></div>
<span class="lbl" style="left:219.5px;top:122.7px">%</span>
<div class="spin dsp " style="left:252px;top:123px;width:56px"><span style="left:3.7px">0,0</span><i></i></div>
<span class="lbl" style="left:310.5px;top:122.7px">%</span>
<div class="spin dsp dn" style="left:351px;top:123px;width:56px"><span style="left:3.7px">0,0</span><i></i></div>
<span class="lbl" style="left:409.5px;top:122.7px">%</span>
<div class="abs" style="left:14px;top:160.6px;width:150px;text-align:center;font-weight:bold;font-size:13.600px;white-space:nowrap">Экспонента:</div>
<div class="spin dsp " style="left:161px;top:156px;width:56px"><span style="left:3.7px">1,00</span><i></i></div>
<div class="spin dsp " style="left:252px;top:156px;width:56px"><span style="left:3.7px">1,00</span><i></i></div>
<div class="abs xs" style="left:14px;top:193.4px;width:150px;text-align:center;white-space:nowrap;font-size:11.35px">Чередовать:</div>
<div class="abs chk" style="left:164px;top:193px"></div>
<div class="abs chk" style="left:255px;top:193px"></div>
<div class="abs xs" style="left:14px;top:221.4px;width:150px;text-align:center;white-space:nowrap;font-size:11.3px">Накапливать:</div>
<div class="abs chk" style="left:164px;top:221px"></div>
<div class="abs chk" style="left:255px;top:221px"></div>
<div class="abs xs" style="left:14px;top:249.4px;width:150px;text-align:center;white-space:nowrap;font-size:11.1px">Исключить элемент:</div>
<div class="abs chk" style="left:164px;top:249px"></div>
<div class="abs chk" style="left:255px;top:249px"></div>
<div class="abs rad on" style="left:23px;top:365px"></div>
<span class="lbl" style="left:42.5px;top:363px">Строк, столбцов:</span>
<div class="spin dsp dn" style="left:174px;top:359px;width:64px"><span style="left:3.7px">1</span><i></i></div>
<span class="lbl" style="left:243px;top:363.5px">×</span>
<div class="spin dsp " style="left:259px;top:359px;width:64px"><span style="left:3.7px">100</span><i></i></div>
<div class="abs rad" style="left:23px;top:397px"></div>
<span class="lbl" style="left:42.5px;top:395px">Ширина, высота:</span>
<div class="spin dsp dis" style="left:174px;top:391px;width:64px"><span style="left:3.7px">50,00</span><i></i></div>
<span class="lbl" style="left:243px;top:395.5px;color:#aaa29a">×</span>
<div class="spin dsp dis" style="left:259px;top:391px;width:64px"><span style="left:3.7px">50,00</span><i></i></div>
<div class="abs" style="left:329px;top:390px;width:52px;height:26px;border:1px solid #c4b8ac;border-radius:3px;background:#efebe7"><span class="lbl xs" style="left:8px;top:5px;color:#aaa29a">px</span><div class="abs" style="left:30px;top:3px;width:1px;height:18px;background:#cfc5bb"></div><svg class="abs" style="left:35px;top:6px" width="10" height="13"><path d="M2 4.500L5 1.500L8 4.500M2 8L5 11L8 8" fill="none" stroke="#aaa29a" stroke-width="1.100"/></svg></div>
<div class="abs chk" style="left:13px;top:431px"></div>
<span class="lbl" style="left:31px;top:428.5px;letter-spacing:.085px">Использовать запомненный размер и позицию оригинала</span>
<div class="abs btn" style="left:11px;top:453px;width:83px;height:27px;">С<u>б</u>росить</div>
<div class="abs btn" style="left:398px;top:453px;width:77px;height:27px;"><u>У</u>далить</div>
<div class="abs btn" style="left:477.5px;top:453px;width:93px;height:27px;"><span style="padding-left:3px"><u>Р</u>азровнять</span></div>
<div class="abs btn" style="left:577px;top:453px;width:73px;height:27px;font-weight:bold;font-size:13.700px;padding-top:4.700px;"><u>С</u>оздать</div>
<span class="lbl xs" style="font-size:11.600px;left:9.6px;top:485.7px">У объекта узор из <b>100</b> клонов.</span>
</div>

</body></html>
